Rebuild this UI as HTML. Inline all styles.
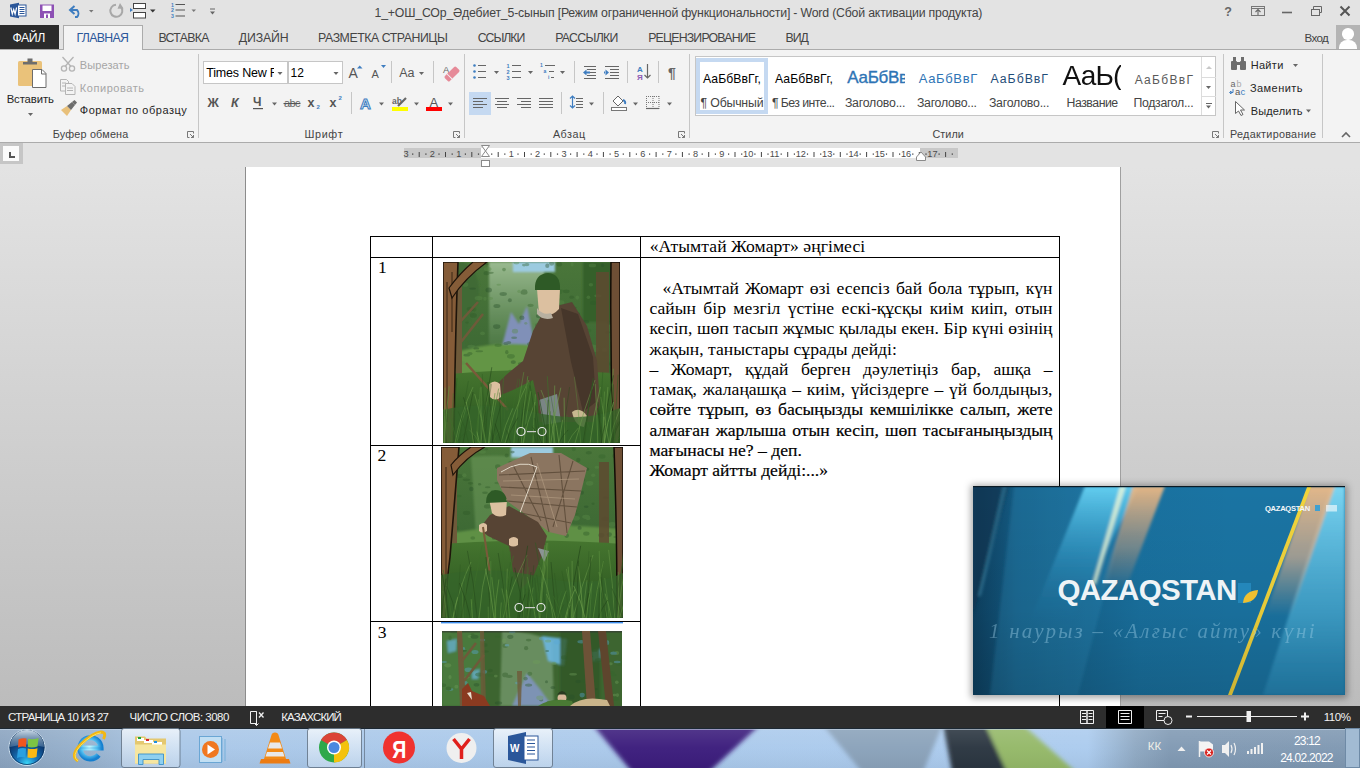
<!DOCTYPE html>
<html><head><meta charset="utf-8">
<style>
*{margin:0;padding:0;box-sizing:border-box}
html,body{width:1360px;height:768px;overflow:hidden;background:#e3e3e3;font-family:"Liberation Sans",sans-serif;position:relative}
.a{position:absolute}
.t{position:absolute;white-space:nowrap;line-height:1}
svg{position:absolute;overflow:visible}
.sep{position:absolute;width:1px;background:#c6c6c6}
.dd{position:absolute;width:0;height:0;border-left:3px solid transparent;border-right:3px solid transparent;border-top:3px solid #666}
.body{position:absolute;left:649.5px;width:403px;font-family:"Liberation Serif",serif;font-size:17.6px;line-height:1;color:#000;white-space:nowrap}
.j{text-align:justify;text-align-last:justify;white-space:normal}
</style></head><body>
<!-- chrome backgrounds -->
<div class="a" style="left:0;top:0;width:1360px;height:49px;background:#e3e3e3"></div>
<div class="a" style="left:0;top:49px;width:1360px;height:1px;background:#ababab"></div>
<div class="a" style="left:0;top:50px;width:1360px;height:92px;background:#f3f3f3"></div>
<div class="a" style="left:0;top:142px;width:1360px;height:1px;background:#ababab"></div>
<div class="a" style="left:0;top:143px;width:1360px;height:24px;background:#e3e3e3"></div>
<div class="a" style="left:0;top:167px;width:1360px;height:539px;background:linear-gradient(#e3e3e3,#bcbcbc)"></div>
<div class="a" style="left:245px;top:167px;width:876px;height:539px;background:#fff;border-left:1px solid #8c8c8c;border-right:1px solid #a0a0a0"></div>
<div class="a" style="left:0;top:706px;width:1360px;height:22px;background:#2d2d2d"></div>

<!-- tabs -->
<div class="a" style="left:0;top:25px;width:59px;height:24px;background:#2b2b2b"></div>
<div class="a" style="left:63px;top:25px;width:80px;height:25px;background:#f3f3f3;border:1px solid #ababab;border-bottom:none"></div>
<div class="a" style="left:1336px;top:25px;width:24px;height:24px;background:#b4b4b4;overflow:hidden">
 <div class="a" style="left:6px;top:3px;width:11.5px;height:11.5px;border-radius:50%;background:#fff"></div>
 <div class="a" style="left:3px;top:14.5px;width:18px;height:16px;border-radius:8px 8px 0 0;background:#fff"></div>
</div>

<!-- title bar icons -->
<svg style="left:0;top:0" width="240" height="25">
 <path d="M10 4.5 L19 2.8 V18.2 L10 16.5z" fill="#2b579a"/>
 <rect x="17.5" y="5" width="8.5" height="11" fill="#fff" stroke="#2b579a"/>
 <path d="M19.5 7.5h5M19.5 9.5h5M19.5 11.5h5M19.5 13.5h5" stroke="#2b579a" stroke-width="1"/>
 <path d="M10.8 7.5 L12.3 14 L13.7 9.5 L15.1 14 L16.6 7.5" stroke="#fff" stroke-width="1.2" fill="none"/>
 <path d="M40 4.5 H54 V18 H40z" fill="#8d50b4"/>
 <rect x="42.5" y="5.5" width="9" height="5.5" fill="#fff"/>
 <rect x="44" y="13.5" width="6" height="4.5" fill="#fff"/>
 <rect x="46" y="14.5" width="2" height="3.5" fill="#8d50b4"/>
 <path d="M74.5 6 L70 10 L74.5 14" stroke="#3e7dc0" stroke-width="2" fill="none"/>
 <path d="M70.5 10 H77 A5 5 0 0 1 77 17 H75" stroke="#3e7dc0" stroke-width="2" fill="none"/>
 <path d="M89 10h4.5l-2.25 2.5z" fill="#777"/>
 <path d="M121 7 A6 6 0 1 1 116 4.8" stroke="#a8a8a8" stroke-width="2" fill="none"/>
 <path d="M120 3 L123.5 8.5 L117.5 8.8z" fill="#a8a8a8"/>
 <rect x="133.5" y="3.5" width="12" height="5" fill="#fff" stroke="#444"/>
 <rect x="133.5" y="12.5" width="12" height="5.5" fill="#fff" stroke="#444"/>
 <path d="M130 8 L133 10 L130 12z" fill="#3e7dc0"/>
 <path d="M150 9.5h5.5l-2.75 3z" fill="#333"/>
 <g font-family="Liberation Sans" font-size="5.2" font-weight="bold" fill="#3e7dc0"><text x="171" y="7">1</text><text x="171" y="12.3">2</text><text x="171" y="17.6">3</text></g>
 <path d="M175.5 4.5h9.5M175.5 10h9.5M175.5 16h9.5" stroke="#555" stroke-width="1.2"/>
 <path d="M191.5 9.5h4.5l-2.25 2.5z" fill="#777"/>
 <path d="M210 9h5" stroke="#666" stroke-width="1"/>
 <path d="M210 11.5h5l-2.5 3z" fill="#666"/>
</svg>
<!-- window controls -->
<svg style="left:1210px;top:0" width="150" height="25">
 <text x="14.2" y="16" font-family="Liberation Sans" font-size="12.5" font-weight="bold" fill="#666">?</text>
 <rect x="41.5" y="6.5" width="13" height="9" fill="none" stroke="#777"/>
 <path d="M42 8.5h12" stroke="#777"/>
 <path d="M48 15v-5M45.5 12l2.5-2.5 2.5 2.5" stroke="#666" fill="none" stroke-width="1.1"/>
 <path d="M72 12.5h10" stroke="#666" stroke-width="1.6"/>
 <rect x="101.5" y="9.5" width="8" height="6" fill="none" stroke="#666"/>
 <path d="M103.5 9.5v-3h8v6h-2" stroke="#666" fill="none"/>
 <path d="M130.5 6.5l9 9M139.5 6.5l-9 9" stroke="#555" stroke-width="2"/>
</svg>

<!-- ribbon separators -->
<div class="sep" style="left:198px;top:54px;height:84px"></div>
<div class="sep" style="left:464px;top:54px;height:84px"></div>
<div class="sep" style="left:689px;top:54px;height:84px"></div>
<div class="sep" style="left:1223px;top:54px;height:84px"></div>
<div class="sep" style="left:1322px;top:54px;height:84px"></div>
<div class="sep" style="left:391px;top:61px;height:22px"></div>
<div class="sep" style="left:433px;top:61px;height:22px"></div>
<div class="sep" style="left:351px;top:92px;height:22px"></div>
<div class="sep" style="left:574px;top:61px;height:22px"></div>
<div class="sep" style="left:627px;top:61px;height:22px"></div>
<div class="sep" style="left:658px;top:61px;height:22px"></div>
<div class="sep" style="left:561px;top:92px;height:22px"></div>
<div class="sep" style="left:603px;top:92px;height:22px"></div>

<svg style="left:0;top:0" width="1360" height="143">
<defs>
 <g id="dl"><path d="M0.5 0.5h6v2M0.5 0.5v6h2" stroke="#777" fill="none"/><path d="M3 3l3.5 3.5M6.5 4v2.5H4" stroke="#777" fill="none"/></g>
 <path id="arr" d="M0 0h5l-2.5 3z" fill="#666"/>
</defs>
<!-- paste -->
<rect x="18" y="61" width="24" height="25" rx="1.5" fill="#eac27a"/>
<path d="M23 64.5h14v-2.5h-4.5v-3.5h-5v3.5h-4.5z" fill="#6d6d6d"/>
<path d="M32.5 69.5h9.5l4 4v14h-13.5z" fill="#fff" stroke="#6d6d6d"/>
<path d="M41.5 69.5v4.5h4.5" fill="none" stroke="#6d6d6d"/>
<use href="#arr" x="28" y="113"/>
<!-- scissors -->
<g stroke="#b4b4b4" stroke-width="1.3" fill="none">
 <path d="M62.5 57l8.5 9.5M73.5 57l-8.5 9.5"/>
 <circle cx="64" cy="68.5" r="2.6"/><circle cx="72" cy="68.5" r="2.6"/>
</g>
<!-- copy -->
<g stroke="#b4b4b4" fill="#f3f3f3">
 <path d="M60.5 79.5h6l2 2v9.5h-8z"/>
 <path d="M65.5 83.5h6.5l3 3v8h-9.5z"/>
 <path d="M62 83h4M62 86h4M67 88h6M67 90.5h6" stroke-width="1"/>
</g>
<!-- format painter -->
<path d="M61 110l6-4 4 4-4 6z" fill="#e8c07a"/>
<path d="M67 106l5-4 3 3-4 5z" fill="#6d6d6d"/>
<path d="M72 102l2.5-2 2.5 2.5-2 2.5z" fill="#6d6d6d"/>
<use href="#dl" x="187" y="131"/>
<use href="#dl" x="453" y="131"/>
<use href="#dl" x="678" y="131"/>
<use href="#dl" x="1212" y="131"/>
<!-- font boxes -->
<rect x="203.5" y="61.5" width="84" height="22" fill="#fff" stroke="#c6c6c6"/>
<rect x="288.5" y="61.5" width="54" height="22" fill="#fff" stroke="#c6c6c6"/>
<use href="#arr" x="277.5" y="72"/>
<use href="#arr" x="333.5" y="72"/>
<!-- grow/shrink -->
<text x="348.5" y="78" font-family="Liberation Sans" font-size="14" fill="#555">A</text>
<path d="M357 68.5h5.5l-2.75-3z" fill="#3e7dc0"/>
<text x="371.5" y="78" font-family="Liberation Sans" font-size="11" fill="#555">A</text>
<path d="M381 65h5l-2.5 3z" fill="#3e7dc0"/>
<use href="#arr" x="419" y="72"/>
<!-- eraser -->
<text x="443" y="73" font-family="Liberation Sans" font-size="9.5" fill="#666">A</text>
<g transform="rotate(-45 452 74)"><rect x="444" y="70.5" width="16" height="7" rx="1.5" fill="#e68a98"/><rect x="448" y="70.5" width="1" height="7" fill="#f3f3f3"/></g>
<!-- B I U -->
<text x="207.5" y="107" font-family="Liberation Sans" font-size="12.5" font-weight="bold" fill="#555">Ж</text>
<text x="231" y="107" font-family="Liberation Sans" font-size="12.5" font-weight="bold" font-style="italic" fill="#555">К</text>
<text x="253" y="106" font-family="Liberation Sans" font-size="12" font-weight="bold" fill="#555">Ч</text>
<rect x="253" y="108" width="10" height="1.2" fill="#555"/>
<use href="#arr" x="272" y="102.5"/>
<text x="284" y="106.5" font-family="Liberation Sans" font-size="11" fill="#666" letter-spacing="-0.6">abc</text>
<rect x="283.5" y="103" width="17" height="1.1" fill="#555"/>
<text x="307.5" y="107" font-family="Liberation Sans" font-size="12.5" font-weight="bold" fill="#555">x</text>
<text x="316.5" y="109" font-family="Liberation Sans" font-size="6" font-weight="bold" fill="#3e7dc0">2</text>
<text x="329.5" y="107" font-family="Liberation Sans" font-size="12.5" font-weight="bold" fill="#555">x</text>
<text x="338.5" y="100" font-family="Liberation Sans" font-size="6" font-weight="bold" fill="#3e7dc0">2</text>
<!-- text effects -->
<text x="360" y="109" font-family="Liberation Sans" font-size="15" font-weight="bold" fill="#dce9f6" stroke="#3e7dc0" stroke-width="1">A</text>
<use href="#arr" x="379" y="102.5"/>
<text x="392" y="104" font-family="Liberation Sans" font-size="8.5" font-weight="bold" fill="#666">ab</text>
<path d="M398 106l8-8" stroke="#666" stroke-width="2.2"/>
<rect x="392" y="107" width="16" height="4" fill="#ffff00"/>
<use href="#arr" x="414" y="102.5"/>
<text x="429.5" y="106.5" font-family="Liberation Sans" font-size="13" fill="#555">A</text>
<rect x="426" y="107" width="16" height="4" fill="#ff0000"/>
<use href="#arr" x="448" y="102.5"/>
<!-- bullets -->
<g fill="#3e7dc0"><circle cx="474.5" cy="65.5" r="1.3"/><circle cx="474.5" cy="71.5" r="1.3"/><circle cx="474.5" cy="77.5" r="1.3"/></g>
<path d="M478 65.5h8M478 71.5h8M478 77.5h8" stroke="#666" stroke-width="1"/>
<use href="#arr" x="494" y="71"/>
<g font-family="Liberation Sans" font-size="5.5" font-weight="bold" fill="#3e7dc0"><text x="506.5" y="67.5">1</text><text x="506.5" y="73.5">2</text><text x="506.5" y="79.5">3</text></g>
<path d="M512 65.5h9M512 71.5h9M512 77.5h9" stroke="#666" stroke-width="1"/>
<use href="#arr" x="528" y="71"/>
<g font-family="Liberation Sans" font-size="5" font-weight="bold" fill="#3e7dc0"><text x="540" y="67">1</text><text x="543.5" y="73">a</text><text x="548" y="79">i</text></g>
<path d="M545 65.5h10M549 71.5h5M551 77.5h3" stroke="#666" stroke-width="1"/>
<use href="#arr" x="560" y="71"/>
<!-- indents -->
<path d="M584 66.5h12M587 69.5h9M587 72.5h9M587 75.5h9M584 78.5h12" stroke="#666" stroke-width="1"/>
<path d="M583 72.5l3.5-3v6z M585 71.5h5v2h-5z" fill="#3e7dc0"/>
<path d="M605 66.5h14M610 69.5h9M610 72.5h9M610 75.5h9M605 78.5h14" stroke="#666" stroke-width="1"/>
<path d="M609 72.5l-3.5-3v6z M604 71.5h2v2h-2z" fill="#3e7dc0"/>
<!-- sort -->
<text x="637" y="72" font-family="Liberation Sans" font-size="8" font-weight="bold" fill="#3e7dc0">A</text>
<text x="637" y="79.5" font-family="Liberation Sans" font-size="8" font-weight="bold" fill="#8d5bb5">Я</text>
<path d="M647.5 64v14M644.5 75l3 3 3-3" stroke="#666" stroke-width="1.2" fill="none"/>
<text x="668" y="78" font-family="Liberation Sans" font-size="14" font-weight="bold" fill="#666">¶</text>
<!-- align -->
<rect x="469" y="92" width="22" height="23" fill="#c5d9f1"/>
<path d="M473 98.5h14M473 101.5h10M473 104.5h14M473 107.5h10" stroke="#666" stroke-width="1"/>
<path d="M495 98.5h14M497 101.5h10M495 104.5h14M497 107.5h10" stroke="#666" stroke-width="1"/>
<path d="M517 98.5h14M521 101.5h10M517 104.5h14M521 107.5h10" stroke="#666" stroke-width="1"/>
<path d="M539 98.5h14M539 101.5h14M539 104.5h14M539 107.5h14" stroke="#666" stroke-width="1"/>
<!-- line spacing -->
<path d="M572.5 96v12M570 98.5l2.5-2.5 2.5 2.5M570 105.5l2.5 2.5 2.5-2.5" stroke="#3e7dc0" stroke-width="1.2" fill="none"/>
<path d="M576 98.5h7M576 101.5h7M576 104.5h7M576 107.5h7" stroke="#666" stroke-width="1"/>
<use href="#arr" x="589" y="102.5"/>
<!-- shading -->
<path d="M613 101l5-5 5 5-5 5z" fill="#fff" stroke="#666"/>
<path d="M623 100a3 3 0 0 1 2 4" stroke="#3e7dc0" stroke-width="2" fill="none"/>
<rect x="611.5" y="107.5" width="15" height="3" fill="#fff" stroke="#777"/>
<use href="#arr" x="633" y="102.5"/>
<!-- borders -->
<path d="M646.5 96v13M653 96v13M659 96v13M646 96.5h13M646 102.5h13" stroke="#777" stroke-dasharray="1 1" fill="none"/>
<path d="M646 108.5h13" stroke="#666" stroke-width="1.2"/>
<use href="#arr" x="667" y="102.5"/>
<!-- styles gallery -->
<rect x="695.5" y="56.5" width="520" height="59" fill="#fff" stroke="#c6c6c6"/>
<rect x="698" y="60" width="68" height="52" fill="none" stroke="#c5d9f1" stroke-width="4"/>
<path d="M1201.5 57v58M1201 77.5h15M1201 96.5h15" stroke="#dcdcdc"/>
<path d="M1206 69h6l-3 -3z" fill="#c8c8c8"/>
<use href="#arr" x="1206" y="86"/>
<path d="M1206 103.5h6" stroke="#666"/><use href="#arr" x="1206" y="105.5"/>
<!-- editing -->
<g fill="#6d6d6d">
 <rect x="1231" y="61" width="6" height="9" rx="1"/><rect x="1240" y="61" width="6" height="9" rx="1"/>
 <rect x="1233" y="57" width="3" height="5"/><rect x="1241" y="57" width="3" height="5"/>
 <rect x="1236" y="62" width="5" height="3"/>
</g>
<use href="#arr" x="1293" y="64"/>
<text x="1230.5" y="87" font-family="Liberation Sans" font-size="9" fill="#666">a</text>
<text x="1236.5" y="87" font-family="Liberation Sans" font-size="9" fill="#aaa">b</text>
<text x="1235" y="95" font-family="Liberation Sans" font-size="9.5" fill="#555">a</text>
<text x="1240.5" y="95" font-family="Liberation Sans" font-size="9.5" fill="#3e7dc0">c</text>
<path d="M1233 89v3.5h-2.5M1229.5 92.5l1.5-1.5v3z" stroke="#3e7dc0" fill="none" stroke-width="1"/>
<path d="M1235.5 101.5v12l3-2.5 2.5 4.5 2-1-2.5-4.5h4z" fill="#fff" stroke="#666"/>
<use href="#arr" x="1306" y="109.5"/>
<path d="M1342 137l4-4 4 4" stroke="#666" stroke-width="1.6" fill="none"/>
</svg>
<div class="a" style="left:206px;top:61px;width:68px;height:22px;overflow:hidden"><div class="t" style="left:0.3px;top:6px;font-size:12.5px;color:#000;letter-spacing:-0.2px">Times New Roman</div></div>
<div class="a" style="left:846px;top:64px;width:59px;height:26px;overflow:hidden"><div class="t" style="left:1.3px;top:4.6px;font-size:17px;color:#2e74b5;-webkit-text-stroke:0.35px #2e74b5;letter-spacing:-0.3px">АаБбВвГг</div></div>
<div class="a" style="left:1062px;top:58px;width:59px;height:32px;overflow:hidden"><div class="t" style="left:0.5px;top:4.3px;font-size:27.5px;color:#111;letter-spacing:-0.8px;transform:scaleX(1.02)">АаЬ(</div></div>


<!-- ruler -->
<div class="a" style="left:0;top:143px;width:23px;height:21px;background:#c6c6c6"></div>
<div class="a" style="left:3px;top:146px;width:16px;height:15px;background:#fbfbfb"></div>
<div class="a" style="left:9px;top:152px;width:2px;height:6px;background:#555"></div>
<div class="a" style="left:9px;top:156px;width:6px;height:2px;background:#555"></div>
<div class="a" style="left:404px;top:148px;width:77px;height:10px;background:#c8c8c8"></div>
<div class="a" style="left:481px;top:148px;width:439px;height:10px;background:#fff"></div>
<div class="a" style="left:920px;top:148px;width:38px;height:10px;background:#c8c8c8"></div>
<svg style="left:0;top:143px" width="1360" height="24">
<text x="406.0" y="13.6" text-anchor="middle" font-family="Liberation Sans" font-size="9.2" fill="#4a4a4a">3</text>
<text x="432.4" y="13.6" text-anchor="middle" font-family="Liberation Sans" font-size="9.2" fill="#4a4a4a">2</text>
<text x="458.7" y="13.6" text-anchor="middle" font-family="Liberation Sans" font-size="9.2" fill="#4a4a4a">1</text>
<text x="511.3" y="13.6" text-anchor="middle" font-family="Liberation Sans" font-size="9.2" fill="#4a4a4a">1</text>
<text x="537.6" y="13.6" text-anchor="middle" font-family="Liberation Sans" font-size="9.2" fill="#4a4a4a">2</text>
<text x="564.0" y="13.6" text-anchor="middle" font-family="Liberation Sans" font-size="9.2" fill="#4a4a4a">3</text>
<text x="590.3" y="13.6" text-anchor="middle" font-family="Liberation Sans" font-size="9.2" fill="#4a4a4a">4</text>
<text x="616.6" y="13.6" text-anchor="middle" font-family="Liberation Sans" font-size="9.2" fill="#4a4a4a">5</text>
<text x="642.9" y="13.6" text-anchor="middle" font-family="Liberation Sans" font-size="9.2" fill="#4a4a4a">6</text>
<text x="669.2" y="13.6" text-anchor="middle" font-family="Liberation Sans" font-size="9.2" fill="#4a4a4a">7</text>
<text x="695.6" y="13.6" text-anchor="middle" font-family="Liberation Sans" font-size="9.2" fill="#4a4a4a">8</text>
<text x="721.9" y="13.6" text-anchor="middle" font-family="Liberation Sans" font-size="9.2" fill="#4a4a4a">9</text>
<text x="748.2" y="13.6" text-anchor="middle" font-family="Liberation Sans" font-size="9.2" fill="#4a4a4a">10</text>
<text x="774.5" y="13.6" text-anchor="middle" font-family="Liberation Sans" font-size="9.2" fill="#4a4a4a">11</text>
<text x="800.8" y="13.6" text-anchor="middle" font-family="Liberation Sans" font-size="9.2" fill="#4a4a4a">12</text>
<text x="827.2" y="13.6" text-anchor="middle" font-family="Liberation Sans" font-size="9.2" fill="#4a4a4a">13</text>
<text x="853.5" y="13.6" text-anchor="middle" font-family="Liberation Sans" font-size="9.2" fill="#4a4a4a">14</text>
<text x="879.8" y="13.6" text-anchor="middle" font-family="Liberation Sans" font-size="9.2" fill="#4a4a4a">15</text>
<text x="906.1" y="13.6" text-anchor="middle" font-family="Liberation Sans" font-size="9.2" fill="#4a4a4a">16</text>
<text x="932.4" y="13.6" text-anchor="middle" font-family="Liberation Sans" font-size="9.2" fill="#4a4a4a">17</text>
<rect x="412.1" y="10.5" width="1.2" height="1.2" fill="#333"/>
<rect x="418.7" y="9" width="1" height="5" fill="#444"/>
<rect x="425.3" y="10.5" width="1.2" height="1.2" fill="#333"/>
<rect x="438.4" y="10.5" width="1.2" height="1.2" fill="#333"/>
<rect x="445.0" y="9" width="1" height="5" fill="#444"/>
<rect x="451.6" y="10.5" width="1.2" height="1.2" fill="#333"/>
<rect x="464.8" y="10.5" width="1.2" height="1.2" fill="#333"/>
<rect x="471.3" y="9" width="1" height="5" fill="#444"/>
<rect x="477.9" y="10.5" width="1.2" height="1.2" fill="#333"/>
<rect x="491.1" y="10.5" width="1.2" height="1.2" fill="#333"/>
<rect x="497.7" y="9" width="1" height="5" fill="#444"/>
<rect x="504.2" y="10.5" width="1.2" height="1.2" fill="#333"/>
<rect x="517.4" y="10.5" width="1.2" height="1.2" fill="#333"/>
<rect x="524.0" y="9" width="1" height="5" fill="#444"/>
<rect x="530.6" y="10.5" width="1.2" height="1.2" fill="#333"/>
<rect x="543.7" y="10.5" width="1.2" height="1.2" fill="#333"/>
<rect x="550.3" y="9" width="1" height="5" fill="#444"/>
<rect x="556.9" y="10.5" width="1.2" height="1.2" fill="#333"/>
<rect x="570.0" y="10.5" width="1.2" height="1.2" fill="#333"/>
<rect x="576.6" y="9" width="1" height="5" fill="#444"/>
<rect x="583.2" y="10.5" width="1.2" height="1.2" fill="#333"/>
<rect x="596.4" y="10.5" width="1.2" height="1.2" fill="#333"/>
<rect x="602.9" y="9" width="1" height="5" fill="#444"/>
<rect x="609.5" y="10.5" width="1.2" height="1.2" fill="#333"/>
<rect x="622.7" y="10.5" width="1.2" height="1.2" fill="#333"/>
<rect x="629.3" y="9" width="1" height="5" fill="#444"/>
<rect x="635.8" y="10.5" width="1.2" height="1.2" fill="#333"/>
<rect x="649.0" y="10.5" width="1.2" height="1.2" fill="#333"/>
<rect x="655.6" y="9" width="1" height="5" fill="#444"/>
<rect x="662.2" y="10.5" width="1.2" height="1.2" fill="#333"/>
<rect x="675.3" y="10.5" width="1.2" height="1.2" fill="#333"/>
<rect x="681.9" y="9" width="1" height="5" fill="#444"/>
<rect x="688.5" y="10.5" width="1.2" height="1.2" fill="#333"/>
<rect x="701.6" y="10.5" width="1.2" height="1.2" fill="#333"/>
<rect x="708.2" y="9" width="1" height="5" fill="#444"/>
<rect x="714.8" y="10.5" width="1.2" height="1.2" fill="#333"/>
<rect x="728.0" y="10.5" width="1.2" height="1.2" fill="#333"/>
<rect x="734.5" y="9" width="1" height="5" fill="#444"/>
<rect x="741.1" y="10.5" width="1.2" height="1.2" fill="#333"/>
<rect x="754.3" y="10.5" width="1.2" height="1.2" fill="#333"/>
<rect x="760.9" y="9" width="1" height="5" fill="#444"/>
<rect x="767.4" y="10.5" width="1.2" height="1.2" fill="#333"/>
<rect x="780.6" y="10.5" width="1.2" height="1.2" fill="#333"/>
<rect x="787.2" y="9" width="1" height="5" fill="#444"/>
<rect x="793.8" y="10.5" width="1.2" height="1.2" fill="#333"/>
<rect x="806.9" y="10.5" width="1.2" height="1.2" fill="#333"/>
<rect x="813.5" y="9" width="1" height="5" fill="#444"/>
<rect x="820.1" y="10.5" width="1.2" height="1.2" fill="#333"/>
<rect x="833.2" y="10.5" width="1.2" height="1.2" fill="#333"/>
<rect x="839.8" y="9" width="1" height="5" fill="#444"/>
<rect x="846.4" y="10.5" width="1.2" height="1.2" fill="#333"/>
<rect x="859.6" y="10.5" width="1.2" height="1.2" fill="#333"/>
<rect x="866.1" y="9" width="1" height="5" fill="#444"/>
<rect x="872.7" y="10.5" width="1.2" height="1.2" fill="#333"/>
<rect x="885.9" y="10.5" width="1.2" height="1.2" fill="#333"/>
<rect x="892.5" y="9" width="1" height="5" fill="#444"/>
<rect x="899.0" y="10.5" width="1.2" height="1.2" fill="#333"/>
<rect x="912.2" y="10.5" width="1.2" height="1.2" fill="#333"/>
<rect x="918.8" y="9" width="1" height="5" fill="#444"/>
<rect x="925.4" y="10.5" width="1.2" height="1.2" fill="#333"/>
<rect x="938.5" y="10.5" width="1.2" height="1.2" fill="#333"/>
<rect x="945.1" y="9" width="1" height="5" fill="#444"/>
<rect x="951.7" y="10.5" width="1.2" height="1.2" fill="#333"/>
<path d="M481.5 2.5h8l-4 5.5z M481.5 13.5h8l-4 -5.5z" fill="#fff" stroke="#8a8a8a"/>
<rect x="481.5" y="17.5" width="8" height="6" fill="#fff" stroke="#8a8a8a"/>
<path d="M916.5 17.5v-3.5l4.5 -5 4.5 5v3.5z" fill="#fff" stroke="#8a8a8a"/>
</svg>

<!-- table -->
<div class="a" style="left:370px;top:236px;width:690px;height:470px;border:1px solid #000;border-bottom:none"></div>
<div class="a" style="left:432px;top:236px;width:1px;height:470px;background:#000"></div>
<div class="a" style="left:640px;top:236px;width:1px;height:470px;background:#000"></div>
<div class="a" style="left:370px;top:257px;width:690px;height:1px;background:#000"></div>
<div class="a" style="left:370px;top:445px;width:271px;height:1px;background:#000"></div>
<div class="a" style="left:370px;top:621px;width:271px;height:1px;background:#000"></div>
<div class="a" style="left:441px;top:622px;width:182px;height:1px;background:#3d8ef0"></div><div class="a" style="left:441px;top:623px;width:182px;height:1px;background:#b5d5f7"></div>

<!-- image 1 -->
<svg style="left:443px;top:262px;overflow:hidden" width="177" height="181" viewBox="0 0 177 181">
 <defs>
  <linearGradient id="g1bg" x1="0" y1="0" x2="0" y2="1"><stop offset="0" stop-color="#4a763a"/><stop offset="0.5" stop-color="#3d6934"/><stop offset="1" stop-color="#2a5220"/></linearGradient>
  <linearGradient id="grass" x1="0" y1="0" x2="0" y2="1"><stop offset="0" stop-color="#45752f"/><stop offset="1" stop-color="#28521d"/></linearGradient>
  <linearGradient id="mist" x1="0" y1="0" x2="0" y2="1"><stop offset="0" stop-color="#a8c6a0"/><stop offset="1" stop-color="#7fa67a" stop-opacity="0.3"/></linearGradient>
  <filter id="sb"><feGaussianBlur stdDeviation="1.2"/></filter>
 </defs>
 <rect width="177" height="181" fill="url(#g1bg)"/>
 <g filter="url(#sb)">
  <path d="M20 0 Q40 10 35 40 Q20 60 25 100 L0 100 L0 0z" fill="#3f6a34"/>
  <path d="M46 0 h55 v82 h-55z" fill="url(#mist)" opacity="0.85"/>
  <path d="M70 0 h42 v10 h-42z" fill="#9ccbe0"/>
  <path d="M140 0 h30 v60 h-30z" fill="#35602c"/>
  <path d="M59 84 L68 50 L76 62 L84 44 L92 84z" fill="#8090b8"/>
  <path d="M0 95 Q50 74 110 86 L110 113 L0 118z" fill="#639545"/>
 </g>
 <g opacity="0.4"><ellipse cx="23.8" cy="93.2" rx="3.4" ry="1.4" fill="#28502a"/><ellipse cx="134.7" cy="51.9" rx="2.4" ry="1.3" fill="#28502a"/><ellipse cx="5.0" cy="91.9" rx="2.6" ry="2.1" fill="#2f5a28"/><ellipse cx="123.2" cy="29.3" rx="3.5" ry="1.9" fill="#2f5a28"/><ellipse cx="159.6" cy="3.4" rx="1.6" ry="1.8" fill="#28502a"/><ellipse cx="121.5" cy="106.6" rx="3.3" ry="1.8" fill="#28502a"/><ellipse cx="166.2" cy="60.8" rx="2.4" ry="2.0" fill="#28502a"/><ellipse cx="168.5" cy="101.9" rx="2.5" ry="2.4" fill="#2f5a28"/><ellipse cx="32.9" cy="109.2" rx="3.6" ry="1.2" fill="#5a8a48"/><ellipse cx="158.5" cy="107.1" rx="2.8" ry="2.5" fill="#35652c"/><ellipse cx="53.7" cy="64.6" rx="3.7" ry="2.3" fill="#28502a"/><ellipse cx="104.3" cy="3.8" rx="2.1" ry="2.2" fill="#28502a"/><ellipse cx="117.7" cy="40.4" rx="3.7" ry="2.2" fill="#5a8a48"/><ellipse cx="15.3" cy="73.0" rx="1.8" ry="1.2" fill="#28502a"/><ellipse cx="65.6" cy="80.6" rx="2.7" ry="1.5" fill="#28502a"/><ellipse cx="114.5" cy="18.5" rx="2.1" ry="1.0" fill="#35652c"/><ellipse cx="95.5" cy="94.6" rx="2.1" ry="1.8" fill="#5a8a48"/><ellipse cx="81.3" cy="29.6" rx="2.9" ry="2.4" fill="#2f5a28"/><ellipse cx="67.9" cy="94.3" rx="3.9" ry="2.4" fill="#35652c"/><ellipse cx="91.8" cy="61.7" rx="2.6" ry="1.1" fill="#5a8a48"/><ellipse cx="100.9" cy="22.0" rx="2.8" ry="1.7" fill="#5a8a48"/><ellipse cx="73.4" cy="0.2" rx="2.9" ry="2.2" fill="#5a8a48"/><ellipse cx="81.1" cy="3.1" rx="2.1" ry="1.3" fill="#35652c"/><ellipse cx="152.4" cy="87.8" rx="3.5" ry="2.2" fill="#5a8a48"/><ellipse cx="5.7" cy="103.8" rx="1.7" ry="2.3" fill="#28502a"/><ellipse cx="2.6" cy="83.1" rx="2.1" ry="1.2" fill="#35652c"/><ellipse cx="61.0" cy="7.6" rx="1.9" ry="1.8" fill="#35652c"/><ellipse cx="116.2" cy="71.3" rx="2.2" ry="2.1" fill="#28502a"/><ellipse cx="83.9" cy="2.6" rx="2.5" ry="1.6" fill="#35652c"/><ellipse cx="45.7" cy="27.9" rx="3.3" ry="2.5" fill="#28502a"/><ellipse cx="144.6" cy="2.3" rx="1.5" ry="1.2" fill="#35652c"/><ellipse cx="78.9" cy="55.7" rx="2.6" ry="2.2" fill="#28502a"/><ellipse cx="39.5" cy="71.3" rx="2.5" ry="1.9" fill="#5a8a48"/><ellipse cx="116.8" cy="46.9" rx="3.3" ry="1.2" fill="#35652c"/><ellipse cx="155.0" cy="33.7" rx="3.6" ry="1.5" fill="#5a8a48"/><ellipse cx="131.7" cy="45.8" rx="2.1" ry="1.0" fill="#2f5a28"/><ellipse cx="104.5" cy="23.9" rx="3.8" ry="1.7" fill="#2f5a28"/><ellipse cx="66.9" cy="38.2" rx="2.0" ry="2.0" fill="#28502a"/><ellipse cx="104.7" cy="54.2" rx="3.8" ry="1.6" fill="#28502a"/><ellipse cx="3.0" cy="67.3" rx="2.5" ry="1.4" fill="#35652c"/><ellipse cx="35.6" cy="36.1" rx="4.0" ry="2.2" fill="#5a8a48"/><ellipse cx="76.0" cy="29.3" rx="1.7" ry="1.6" fill="#5a8a48"/><ellipse cx="161.9" cy="92.1" rx="2.8" ry="2.2" fill="#35652c"/><ellipse cx="11.6" cy="4.4" rx="1.8" ry="1.2" fill="#35652c"/><ellipse cx="47.4" cy="36.5" rx="2.8" ry="1.4" fill="#5a8a48"/><ellipse cx="60.2" cy="32.0" rx="3.7" ry="1.9" fill="#28502a"/><ellipse cx="24.0" cy="60.6" rx="1.8" ry="1.1" fill="#2f5a28"/><ellipse cx="67.3" cy="109.0" rx="1.9" ry="1.2" fill="#2f5a28"/><ellipse cx="108.9" cy="86.0" rx="2.4" ry="1.9" fill="#35652c"/><ellipse cx="100.2" cy="104.7" rx="2.4" ry="1.4" fill="#2f5a28"/><ellipse cx="81.0" cy="30.5" rx="3.5" ry="2.2" fill="#2f5a28"/><ellipse cx="108.6" cy="1.6" rx="2.5" ry="2.2" fill="#2f5a28"/><ellipse cx="33.3" cy="86.4" rx="3.0" ry="1.2" fill="#28502a"/><ellipse cx="29.6" cy="26.6" rx="3.4" ry="1.2" fill="#28502a"/><ellipse cx="142.7" cy="59.7" rx="3.5" ry="1.8" fill="#28502a"/><ellipse cx="55.7" cy="22.8" rx="2.3" ry="1.0" fill="#5a8a48"/><ellipse cx="128.6" cy="35.2" rx="2.5" ry="1.6" fill="#2f5a28"/><ellipse cx="161.7" cy="106.7" rx="3.9" ry="1.2" fill="#35652c"/><ellipse cx="139.0" cy="85.6" rx="3.7" ry="2.3" fill="#28502a"/><ellipse cx="117.1" cy="28.5" rx="2.9" ry="1.5" fill="#35652c"/><ellipse cx="63.8" cy="90.2" rx="1.7" ry="2.1" fill="#2f5a28"/><ellipse cx="115.4" cy="70.8" rx="3.9" ry="1.6" fill="#5a8a48"/><ellipse cx="7.3" cy="20.5" rx="3.5" ry="1.9" fill="#5a8a48"/><ellipse cx="43.5" cy="11.1" rx="3.0" ry="2.2" fill="#2f5a28"/><ellipse cx="43.4" cy="2.2" rx="2.1" ry="1.1" fill="#2f5a28"/><ellipse cx="129.1" cy="2.4" rx="1.5" ry="2.1" fill="#5a8a48"/><ellipse cx="87.3" cy="94.9" rx="1.9" ry="1.8" fill="#5a8a48"/><ellipse cx="13.6" cy="104.4" rx="1.9" ry="2.2" fill="#35652c"/><ellipse cx="145.4" cy="35.2" rx="1.8" ry="1.8" fill="#5a8a48"/><ellipse cx="22.4" cy="22.7" rx="2.9" ry="2.1" fill="#5a8a48"/><ellipse cx="145.3" cy="68.6" rx="3.2" ry="1.8" fill="#35652c"/><ellipse cx="31.5" cy="47.6" rx="1.9" ry="2.1" fill="#35652c"/><ellipse cx="44.7" cy="7.1" rx="3.9" ry="2.2" fill="#5a8a48"/><ellipse cx="95.8" cy="93.6" rx="2.6" ry="1.6" fill="#5a8a48"/><ellipse cx="30.4" cy="53.4" rx="3.5" ry="2.4" fill="#2f5a28"/><ellipse cx="11.0" cy="39.0" rx="1.8" ry="1.2" fill="#5a8a48"/><ellipse cx="174.0" cy="30.5" rx="2.9" ry="1.3" fill="#2f5a28"/><ellipse cx="41.3" cy="0.8" rx="2.8" ry="1.8" fill="#28502a"/><ellipse cx="164.6" cy="70.3" rx="2.1" ry="1.5" fill="#28502a"/><ellipse cx="169.3" cy="78.4" rx="2.3" ry="1.9" fill="#5a8a48"/><ellipse cx="172.1" cy="24.1" rx="3.8" ry="2.1" fill="#5a8a48"/><ellipse cx="28.2" cy="84.3" rx="3.7" ry="1.5" fill="#5a8a48"/><ellipse cx="150.3" cy="40.9" rx="3.3" ry="2.1" fill="#2f5a28"/><ellipse cx="151.6" cy="98.6" rx="3.9" ry="1.9" fill="#35652c"/><ellipse cx="27.6" cy="46.9" rx="3.9" ry="2.1" fill="#2f5a28"/><ellipse cx="87.6" cy="43.3" rx="3.1" ry="1.6" fill="#35652c"/><ellipse cx="96.3" cy="109.4" rx="2.8" ry="1.1" fill="#5a8a48"/><ellipse cx="111.2" cy="29.4" rx="3.8" ry="2.4" fill="#35652c"/><ellipse cx="171.6" cy="67.9" rx="3.9" ry="2.0" fill="#2f5a28"/><ellipse cx="78.8" cy="101.7" rx="3.9" ry="1.6" fill="#28502a"/><ellipse cx="70.3" cy="100.1" rx="2.6" ry="1.9" fill="#28502a"/><ellipse cx="169.8" cy="13.1" rx="3.0" ry="1.6" fill="#2f5a28"/><ellipse cx="116.9" cy="30.5" rx="2.4" ry="1.8" fill="#35652c"/><ellipse cx="93.5" cy="63.7" rx="1.6" ry="2.5" fill="#35652c"/><ellipse cx="147.9" cy="22.7" rx="2.2" ry="1.8" fill="#5a8a48"/><ellipse cx="55.1" cy="83.3" rx="3.6" ry="1.7" fill="#35652c"/><ellipse cx="96.5" cy="54.0" rx="3.6" ry="2.2" fill="#28502a"/><ellipse cx="36.3" cy="89.2" rx="3.8" ry="1.0" fill="#2f5a28"/><ellipse cx="96.5" cy="106.1" rx="3.4" ry="2.5" fill="#35652c"/><ellipse cx="13.3" cy="41.1" rx="3.5" ry="1.7" fill="#5a8a48"/><ellipse cx="134.3" cy="35.6" rx="1.8" ry="2.1" fill="#5a8a48"/><ellipse cx="53.9" cy="43.9" rx="3.5" ry="2.0" fill="#28502a"/><ellipse cx="20.0" cy="101.0" rx="2.5" ry="1.8" fill="#5a8a48"/><ellipse cx="112.5" cy="79.5" rx="3.3" ry="2.1" fill="#35652c"/><ellipse cx="174.7" cy="50.8" rx="3.6" ry="1.6" fill="#5a8a48"/><ellipse cx="124.4" cy="49.4" rx="3.2" ry="1.3" fill="#2f5a28"/><ellipse cx="120.1" cy="63.7" rx="3.9" ry="1.5" fill="#2f5a28"/><ellipse cx="87.2" cy="82.0" rx="3.1" ry="2.0" fill="#2f5a28"/><ellipse cx="72.0" cy="69.2" rx="3.1" ry="2.4" fill="#5a8a48"/><ellipse cx="149.8" cy="84.4" rx="3.5" ry="1.9" fill="#5a8a48"/><ellipse cx="161.5" cy="87.8" rx="2.5" ry="2.0" fill="#5a8a48"/><ellipse cx="26.9" cy="91.6" rx="2.7" ry="1.7" fill="#2f5a28"/><ellipse cx="47.9" cy="10.8" rx="3.0" ry="1.1" fill="#2f5a28"/><ellipse cx="116.3" cy="2.2" rx="2.8" ry="2.4" fill="#2f5a28"/><ellipse cx="71.1" cy="75.8" rx="3.0" ry="1.3" fill="#35652c"/><ellipse cx="42.0" cy="36.7" rx="1.7" ry="2.0" fill="#5a8a48"/><ellipse cx="82.8" cy="61.3" rx="1.6" ry="1.4" fill="#5a8a48"/><ellipse cx="63.0" cy="81.4" rx="2.5" ry="1.6" fill="#28502a"/><ellipse cx="139.8" cy="95.3" rx="2.3" ry="1.3" fill="#35652c"/><ellipse cx="149.4" cy="3.4" rx="3.7" ry="1.9" fill="#5a8a48"/></g>
<path d="M13 20h6v106h-6z" fill="#6e5a3a"/>
 <path d="M18 80 L40 52 M17 60 L35 40" stroke="#6e5a3a" stroke-width="2.5"/>
 <path d="M153 10h13v150h-13z" fill="#5e4a30" opacity="0.85"/>
 <path d="M0 113 Q80 104 177 112 V181 H0z" fill="url(#grass)"/>
 <path d="M0 0h15 q-3 80 -4 181 H0z" fill="#855c38" stroke="#1e140a" stroke-width="1.6"/>
 <path d="M4 20 v140 M9 10 v60" stroke="#3a2614" stroke-width="1"/>
 <path d="M9 36 Q22 16 44 0 H30 Q17 11 6 26z" fill="#855c38" stroke="#1e140a" stroke-width="1.2"/>
 <path d="M168 0h9v181h-7 q-3 -90 -2 -181z" fill="#6e4f35" stroke="#120c06" stroke-width="1.5"/>
 <!-- man -->
 <path d="M102 47 L129 40 L144 64 L154 99 L157 143 L151 160 L96 160 L95 140 L90 118 L70 128 L58 133 L53 123 L63 113 L80 99 L90 69z" fill="#574434"/>
 <path d="M118 46 L135 52 L150 95 L153 140 L140 150 L128 100z" fill="#46362a"/>
 <path d="M94 27 h23 l-1 20 q-8 9 -20 5z" fill="#dcc0a0"/>
 <path d="M94 46 q6 8 14 5 l2 5 q-10 3 -16 -4z" fill="#b8b0a0"/>
 <path d="M92 28 q-1 -16 13 -17 q13 1 12 17z" fill="#2e5a26"/>
 <path d="M23 101 L65 148" stroke="#7a5a3a" stroke-width="2.5"/>
 <path d="M46 122 q6 -5 11 0 l1 13 q-6 5 -11 0z" fill="#dcc0a0"/>
 <path d="M96 138 L114 132 L118 160 L100 163z" fill="#7a8585"/>
 <path d="M129 150 q8 -6 15 4 l-3 11 q-9 -1 -12 -15z" fill="#c8b890"/>
 <path d="M0 148 Q40 138 90 150 T177 146 V181 H0z" fill="#36652a" opacity="0.8"/>
 <g stroke="#6a9a48" stroke-width="0.9" opacity="0.6" fill="none"><path d="M12 181 Q18 150 30 125M38 181 Q40 150 48 120M62 181 Q70 150 86 118M112 181 Q108 150 98 128M132 181 Q140 150 152 118M166 181 Q160 150 158 135M80 181 Q84 160 92 140"/></g>
 <g stroke="#2a4f1e" stroke-width="1" opacity="0.7" fill="none"><path d="M20 181 L30 130M50 181 L45 120M75 181 L85 115M105 181 L95 130M140 181 L150 120M160 181 L155 140"/></g>
 <g fill="none" stroke-width="0.9"><path d="M41.8 181.0 Q41.0 146.4 39.3 111.8" stroke="#2f5a22" opacity="0.44"/><path d="M3.5 181.0 Q2.0 161.1 -1.5 141.3" stroke="#24481a" opacity="0.49"/><path d="M95.0 181.0 Q92.6 152.1 87.1 123.3" stroke="#24481a" opacity="0.50"/><path d="M166.9 181.0 Q167.9 143.8 170.3 106.7" stroke="#5c8f3e" opacity="0.72"/><path d="M34.2 181.0 Q35.2 153.2 37.3 125.5" stroke="#5c8f3e" opacity="0.43"/><path d="M107.2 181.0 Q107.3 165.2 107.4 149.3" stroke="#2f5a22" opacity="0.50"/><path d="M49.6 181.0 Q51.8 174.2 57.2 167.3" stroke="#3d6e2a" opacity="0.74"/><path d="M1.3 181.0 Q2.8 152.6 6.2 124.3" stroke="#5c8f3e" opacity="0.74"/><path d="M90.0 181.0 Q90.7 156.7 92.4 132.3" stroke="#6a9a48" opacity="0.58"/><path d="M41.3 181.0 Q43.4 151.6 48.4 122.1" stroke="#24481a" opacity="0.42"/><path d="M110.9 181.0 Q111.1 152.3 111.7 123.5" stroke="#6a9a48" opacity="0.68"/><path d="M25.7 181.0 Q22.6 165.2 15.3 149.5" stroke="#2f5a22" opacity="0.65"/><path d="M78.1 181.0 Q77.6 149.1 76.5 117.1" stroke="#3d6e2a" opacity="0.53"/><path d="M98.9 181.0 Q96.0 172.8 89.3 164.7" stroke="#24481a" opacity="0.68"/><path d="M49.1 181.0 Q51.7 162.2 57.8 143.4" stroke="#24481a" opacity="0.53"/><path d="M31.4 181.0 Q28.1 158.1 20.5 135.3" stroke="#24481a" opacity="0.76"/><path d="M169.0 181.0 Q172.3 167.3 180.0 153.5" stroke="#24481a" opacity="0.53"/><path d="M56.9 181.0 Q58.0 148.0 60.6 115.1" stroke="#3d6e2a" opacity="0.67"/><path d="M13.8 181.0 Q16.6 163.4 23.2 145.8" stroke="#5c8f3e" opacity="0.45"/><path d="M67.5 181.0 Q66.3 174.7 63.5 168.5" stroke="#24481a" opacity="0.55"/><path d="M80.5 181.0 Q82.7 155.1 87.8 129.1" stroke="#5c8f3e" opacity="0.63"/><path d="M77.8 181.0 Q80.8 149.8 87.8 118.7" stroke="#24481a" opacity="0.42"/><path d="M9.8 181.0 Q11.1 148.6 14.0 116.1" stroke="#2f5a22" opacity="0.64"/><path d="M96.7 181.0 Q95.4 162.2 92.4 143.5" stroke="#24481a" opacity="0.45"/><path d="M93.7 181.0 Q93.0 168.5 91.5 156.1" stroke="#2f5a22" opacity="0.59"/><path d="M42.8 181.0 Q39.5 156.6 31.7 132.1" stroke="#6a9a48" opacity="0.58"/><path d="M114.6 181.0 Q112.5 157.1 107.8 133.2" stroke="#2f5a22" opacity="0.41"/><path d="M45.0 181.0 Q42.9 151.0 38.0 121.0" stroke="#2f5a22" opacity="0.57"/><path d="M46.3 181.0 Q49.1 153.7 55.7 126.5" stroke="#5c8f3e" opacity="0.63"/><path d="M175.3 181.0 Q178.2 156.3 185.0 131.6" stroke="#24481a" opacity="0.60"/><path d="M16.4 181.0 Q19.1 150.0 25.4 118.9" stroke="#2f5a22" opacity="0.53"/><path d="M116.3 181.0 Q117.3 169.4 119.7 157.8" stroke="#6a9a48" opacity="0.61"/><path d="M115.9 181.0 Q114.2 165.6 110.3 150.3" stroke="#6a9a48" opacity="0.78"/><path d="M13.2 181.0 Q16.5 175.0 24.2 169.1" stroke="#2f5a22" opacity="0.42"/><path d="M159.1 181.0 Q162.5 147.2 170.4 113.4" stroke="#24481a" opacity="0.75"/><path d="M121.7 181.0 Q121.5 158.3 121.1 135.7" stroke="#6a9a48" opacity="0.77"/><path d="M38.7 181.0 Q41.7 143.1 48.8 105.2" stroke="#24481a" opacity="0.64"/><path d="M45.5 181.0 Q47.5 156.1 52.0 131.1" stroke="#6a9a48" opacity="0.75"/><path d="M97.5 181.0 Q95.3 172.0 90.3 163.0" stroke="#3d6e2a" opacity="0.53"/><path d="M157.8 181.0 Q157.6 168.5 157.2 156.1" stroke="#3d6e2a" opacity="0.58"/><path d="M14.0 181.0 Q11.2 165.9 4.7 150.9" stroke="#3d6e2a" opacity="0.75"/><path d="M107.6 181.0 Q106.6 147.6 104.3 114.2" stroke="#3d6e2a" opacity="0.76"/><path d="M52.6 181.0 Q49.5 154.4 42.4 127.9" stroke="#3d6e2a" opacity="0.58"/><path d="M36.3 181.0 Q35.5 175.2 33.7 169.5" stroke="#6a9a48" opacity="0.74"/><path d="M70.8 181.0 Q73.8 145.5 80.8 110.1" stroke="#5c8f3e" opacity="0.60"/><path d="M76.8 181.0 Q78.8 171.3 83.4 161.6" stroke="#24481a" opacity="0.65"/><path d="M166.5 181.0 Q169.6 164.0 176.8 147.0" stroke="#6a9a48" opacity="0.57"/><path d="M141.3 181.0 Q144.0 148.5 150.3 116.0" stroke="#2f5a22" opacity="0.68"/><path d="M57.8 181.0 Q56.1 171.4 52.0 161.7" stroke="#24481a" opacity="0.68"/><path d="M1.0 181.0 Q1.3 153.3 2.1 125.6" stroke="#6a9a48" opacity="0.71"/><path d="M106.4 181.0 Q106.5 160.4 106.9 139.7" stroke="#6a9a48" opacity="0.74"/><path d="M63.2 181.0 Q66.6 168.3 74.8 155.6" stroke="#24481a" opacity="0.67"/><path d="M107.9 181.0 Q110.9 153.3 117.8 125.7" stroke="#6a9a48" opacity="0.71"/><path d="M100.6 181.0 Q100.6 173.9 100.8 166.8" stroke="#6a9a48" opacity="0.65"/><path d="M78.2 181.0 Q80.2 147.6 84.8 114.3" stroke="#5c8f3e" opacity="0.79"/><path d="M60.2 181.0 Q60.9 157.3 62.7 133.6" stroke="#3d6e2a" opacity="0.47"/><path d="M159.6 181.0 Q160.2 155.3 161.5 129.6" stroke="#5c8f3e" opacity="0.67"/><path d="M156.3 181.0 Q157.4 145.5 159.8 110.1" stroke="#2f5a22" opacity="0.53"/><path d="M65.8 181.0 Q68.6 148.8 75.0 116.5" stroke="#3d6e2a" opacity="0.41"/><path d="M168.0 181.0 Q170.2 170.4 175.3 159.8" stroke="#24481a" opacity="0.46"/><path d="M103.4 181.0 Q103.9 159.3 105.2 137.7" stroke="#24481a" opacity="0.70"/><path d="M171.4 181.0 Q172.5 146.9 175.1 112.7" stroke="#2f5a22" opacity="0.65"/><path d="M147.1 181.0 Q150.2 153.0 157.4 125.0" stroke="#6a9a48" opacity="0.75"/><path d="M42.0 181.0 Q40.0 159.2 35.3 137.3" stroke="#5c8f3e" opacity="0.49"/><path d="M57.8 181.0 Q61.4 163.7 69.7 146.4" stroke="#6a9a48" opacity="0.60"/><path d="M171.6 181.0 Q171.2 153.3 170.1 125.7" stroke="#3d6e2a" opacity="0.41"/><path d="M32.5 181.0 Q33.9 160.8 37.2 140.7" stroke="#3d6e2a" opacity="0.73"/><path d="M71.5 181.0 Q68.1 155.8 60.2 130.7" stroke="#3d6e2a" opacity="0.43"/><path d="M172.4 181.0 Q175.4 175.6 182.4 170.2" stroke="#3d6e2a" opacity="0.72"/><path d="M161.1 181.0 Q161.0 167.9 160.7 154.9" stroke="#6a9a48" opacity="0.76"/><path d="M137.7 181.0 Q135.8 147.9 131.4 114.8" stroke="#5c8f3e" opacity="0.45"/><path d="M8.3 181.0 Q8.9 156.1 10.3 131.3" stroke="#3d6e2a" opacity="0.62"/><path d="M169.8 181.0 Q170.0 151.7 170.4 122.3" stroke="#2f5a22" opacity="0.70"/><path d="M36.4 181.0 Q33.4 174.3 26.3 167.7" stroke="#5c8f3e" opacity="0.42"/><path d="M175.7 181.0 Q178.5 152.5 185.0 124.1" stroke="#2f5a22" opacity="0.69"/><path d="M116.0 181.0 Q118.7 174.4 125.1 167.9" stroke="#24481a" opacity="0.62"/><path d="M122.8 181.0 Q123.2 166.9 124.1 152.8" stroke="#3d6e2a" opacity="0.56"/><path d="M38.1 181.0 Q38.1 152.8 38.2 124.7" stroke="#6a9a48" opacity="0.47"/><path d="M154.8 181.0 Q154.1 151.5 152.2 121.9" stroke="#5c8f3e" opacity="0.74"/><path d="M58.1 181.0 Q57.6 155.8 56.3 130.5" stroke="#24481a" opacity="0.51"/><path d="M119.7 181.0 Q121.8 153.0 126.6 125.1" stroke="#24481a" opacity="0.46"/><path d="M150.2 181.0 Q148.3 170.2 143.8 159.3" stroke="#3d6e2a" opacity="0.40"/><path d="M161.3 181.0 Q164.0 160.6 170.5 140.1" stroke="#6a9a48" opacity="0.80"/><path d="M125.0 181.0 Q128.2 173.4 135.5 165.8" stroke="#6a9a48" opacity="0.53"/><path d="M30.5 181.0 Q28.3 160.5 23.1 140.0" stroke="#6a9a48" opacity="0.65"/><path d="M161.4 181.0 Q162.4 153.1 164.9 125.1" stroke="#6a9a48" opacity="0.64"/><path d="M6.6 181.0 Q4.8 163.9 0.7 146.7" stroke="#3d6e2a" opacity="0.52"/><path d="M158.5 181.0 Q157.4 163.6 154.7 146.3" stroke="#24481a" opacity="0.76"/><path d="M158.1 181.0 Q159.2 172.1 161.9 163.3" stroke="#24481a" opacity="0.64"/><path d="M93.3 181.0 Q92.2 175.6 89.8 170.2" stroke="#24481a" opacity="0.47"/></g>
<circle cx="78" cy="169.5" r="4" fill="none" stroke="#e8e8e8" stroke-width="1.2"/>
 <circle cx="99" cy="169.5" r="4" fill="none" stroke="#e8e8e8" stroke-width="1.2"/>
 <rect x="84" y="169" width="9" height="1.2" fill="#ccc"/>
</svg>
<!-- image 2 -->
<svg style="left:441px;top:447px;overflow:hidden" width="182" height="171" viewBox="0 0 182 171">
 <rect width="182" height="171" fill="url(#g1bg)"/>
 <g filter="url(#sb)">
  <path d="M70 0 h42 v11 h-42z" fill="#9ccbe0"/>
  <path d="M30 10 Q80 5 120 20 L130 80 L35 90z" fill="#6f9e5e" opacity="0.5"/>
  <path d="M0 88 Q80 72 182 82 L182 100 L0 105z" fill="#5e9044"/>
 </g>
 <g opacity="0.4"><ellipse cx="174.0" cy="90.0" rx="1.6" ry="1.1" fill="#35652c"/><ellipse cx="133.9" cy="63.6" rx="2.3" ry="1.9" fill="#2f5a28"/><ellipse cx="105.8" cy="15.0" rx="2.6" ry="1.6" fill="#5a8a48"/><ellipse cx="99.0" cy="42.3" rx="2.2" ry="1.1" fill="#2f5a28"/><ellipse cx="66.3" cy="88.5" rx="3.8" ry="1.6" fill="#35652c"/><ellipse cx="102.0" cy="22.4" rx="1.6" ry="1.5" fill="#35652c"/><ellipse cx="92.9" cy="34.2" rx="2.8" ry="1.8" fill="#28502a"/><ellipse cx="145.0" cy="69.8" rx="3.8" ry="2.1" fill="#5a8a48"/><ellipse cx="65.9" cy="81.6" rx="2.6" ry="2.4" fill="#28502a"/><ellipse cx="130.2" cy="43.8" rx="2.8" ry="1.7" fill="#28502a"/><ellipse cx="91.2" cy="79.0" rx="2.4" ry="2.3" fill="#28502a"/><ellipse cx="63.8" cy="69.0" rx="2.9" ry="1.7" fill="#35652c"/><ellipse cx="171.2" cy="77.4" rx="3.6" ry="2.3" fill="#5a8a48"/><ellipse cx="140.7" cy="45.6" rx="2.3" ry="2.2" fill="#28502a"/><ellipse cx="56.8" cy="19.7" rx="2.8" ry="2.4" fill="#2f5a28"/><ellipse cx="142.7" cy="32.4" rx="1.5" ry="2.2" fill="#2f5a28"/><ellipse cx="10.7" cy="62.0" rx="2.2" ry="1.3" fill="#2f5a28"/><ellipse cx="137.3" cy="13.0" rx="2.2" ry="2.2" fill="#2f5a28"/><ellipse cx="77.0" cy="68.1" rx="1.6" ry="1.5" fill="#35652c"/><ellipse cx="45.4" cy="2.2" rx="1.8" ry="1.1" fill="#2f5a28"/><ellipse cx="132.8" cy="2.0" rx="2.1" ry="2.2" fill="#35652c"/><ellipse cx="133.7" cy="49.7" rx="1.5" ry="1.9" fill="#35652c"/><ellipse cx="27.6" cy="3.4" rx="2.4" ry="1.9" fill="#2f5a28"/><ellipse cx="52.1" cy="46.4" rx="2.3" ry="1.8" fill="#2f5a28"/><ellipse cx="164.2" cy="71.8" rx="3.7" ry="2.1" fill="#28502a"/><ellipse cx="174.5" cy="8.9" rx="3.2" ry="2.3" fill="#2f5a28"/><ellipse cx="81.5" cy="83.1" rx="1.8" ry="1.9" fill="#28502a"/><ellipse cx="88.6" cy="31.2" rx="3.7" ry="1.5" fill="#5a8a48"/><ellipse cx="110.3" cy="39.9" rx="1.5" ry="1.8" fill="#35652c"/><ellipse cx="122.0" cy="24.0" rx="1.8" ry="1.3" fill="#28502a"/><ellipse cx="115.6" cy="48.3" rx="4.0" ry="2.4" fill="#35652c"/><ellipse cx="42.3" cy="42.2" rx="2.1" ry="1.9" fill="#5a8a48"/><ellipse cx="46.7" cy="40.2" rx="2.8" ry="1.0" fill="#2f5a28"/><ellipse cx="70.0" cy="15.2" rx="2.8" ry="1.1" fill="#2f5a28"/><ellipse cx="18.2" cy="17.3" rx="2.1" ry="1.3" fill="#28502a"/><ellipse cx="82.6" cy="50.9" rx="2.5" ry="2.0" fill="#35652c"/><ellipse cx="132.7" cy="41.2" rx="2.8" ry="1.9" fill="#2f5a28"/><ellipse cx="160.4" cy="88.2" rx="3.0" ry="2.4" fill="#28502a"/><ellipse cx="66.6" cy="49.3" rx="3.8" ry="1.9" fill="#5a8a48"/><ellipse cx="125.7" cy="88.6" rx="2.3" ry="2.3" fill="#28502a"/><ellipse cx="18.4" cy="29.1" rx="3.6" ry="2.0" fill="#2f5a28"/><ellipse cx="147.8" cy="5.7" rx="3.1" ry="1.7" fill="#2f5a28"/><ellipse cx="1.0" cy="2.3" rx="2.3" ry="2.1" fill="#35652c"/><ellipse cx="137.4" cy="18.3" rx="2.9" ry="1.6" fill="#28502a"/><ellipse cx="25.4" cy="32.8" rx="3.7" ry="1.4" fill="#2f5a28"/><ellipse cx="14.7" cy="80.8" rx="3.1" ry="2.4" fill="#2f5a28"/><ellipse cx="4.5" cy="62.6" rx="3.4" ry="2.1" fill="#28502a"/><ellipse cx="52.9" cy="91.2" rx="1.9" ry="1.6" fill="#28502a"/><ellipse cx="95.8" cy="45.4" rx="3.9" ry="2.2" fill="#28502a"/><ellipse cx="152.2" cy="28.2" rx="2.1" ry="1.7" fill="#5a8a48"/><ellipse cx="99.8" cy="66.1" rx="3.2" ry="1.1" fill="#2f5a28"/><ellipse cx="13.0" cy="16.7" rx="2.9" ry="2.2" fill="#2f5a28"/><ellipse cx="145.3" cy="86.6" rx="3.2" ry="2.2" fill="#2f5a28"/><ellipse cx="23.4" cy="28.2" rx="2.1" ry="2.0" fill="#5a8a48"/><ellipse cx="79.9" cy="49.8" rx="1.8" ry="1.8" fill="#28502a"/><ellipse cx="17.5" cy="49.1" rx="3.3" ry="1.4" fill="#35652c"/><ellipse cx="83.9" cy="66.8" rx="2.5" ry="2.5" fill="#35652c"/><ellipse cx="84.9" cy="68.3" rx="3.5" ry="1.6" fill="#35652c"/><ellipse cx="71.5" cy="5.1" rx="2.2" ry="1.4" fill="#28502a"/><ellipse cx="128.4" cy="44.9" rx="3.9" ry="1.5" fill="#2f5a28"/><ellipse cx="138.6" cy="80.9" rx="2.1" ry="1.9" fill="#28502a"/><ellipse cx="148.6" cy="36.3" rx="3.7" ry="2.4" fill="#5a8a48"/><ellipse cx="84.5" cy="67.6" rx="3.7" ry="2.0" fill="#2f5a28"/><ellipse cx="3.1" cy="89.6" rx="3.3" ry="1.9" fill="#35652c"/><ellipse cx="161.0" cy="9.5" rx="3.5" ry="2.2" fill="#35652c"/><ellipse cx="49.9" cy="87.5" rx="3.0" ry="1.7" fill="#35652c"/><ellipse cx="1.5" cy="64.5" rx="2.7" ry="1.8" fill="#35652c"/><ellipse cx="85.0" cy="19.5" rx="3.9" ry="1.1" fill="#2f5a28"/><ellipse cx="164.8" cy="50.7" rx="3.2" ry="1.1" fill="#28502a"/><ellipse cx="168.3" cy="87.6" rx="2.6" ry="2.3" fill="#28502a"/><ellipse cx="5.0" cy="7.6" rx="3.4" ry="1.3" fill="#28502a"/><ellipse cx="46.5" cy="59.4" rx="3.6" ry="2.1" fill="#2f5a28"/><ellipse cx="29.6" cy="36.3" rx="2.7" ry="1.4" fill="#2f5a28"/><ellipse cx="51.4" cy="44.4" rx="1.5" ry="1.1" fill="#28502a"/><ellipse cx="102.7" cy="19.4" rx="3.2" ry="1.7" fill="#35652c"/><ellipse cx="88.0" cy="51.2" rx="3.8" ry="1.1" fill="#5a8a48"/><ellipse cx="55.4" cy="61.4" rx="3.5" ry="2.0" fill="#28502a"/><ellipse cx="94.3" cy="87.4" rx="2.8" ry="1.3" fill="#35652c"/><ellipse cx="145.2" cy="59.7" rx="2.3" ry="1.3" fill="#28502a"/><ellipse cx="102.2" cy="49.7" rx="1.7" ry="1.2" fill="#28502a"/><ellipse cx="155.9" cy="20.3" rx="2.4" ry="1.5" fill="#5a8a48"/><ellipse cx="30.3" cy="42.0" rx="2.2" ry="2.3" fill="#28502a"/><ellipse cx="180.3" cy="20.5" rx="2.2" ry="1.2" fill="#35652c"/><ellipse cx="85.3" cy="71.5" rx="3.6" ry="1.3" fill="#35652c"/><ellipse cx="144.7" cy="22.2" rx="3.5" ry="1.9" fill="#28502a"/><ellipse cx="147.1" cy="71.2" rx="2.2" ry="2.1" fill="#5a8a48"/><ellipse cx="135.1" cy="71.3" rx="3.7" ry="2.4" fill="#5a8a48"/><ellipse cx="96.8" cy="60.5" rx="1.7" ry="1.5" fill="#28502a"/><ellipse cx="31.8" cy="91.0" rx="2.4" ry="1.7" fill="#35652c"/><ellipse cx="57.3" cy="36.0" rx="3.9" ry="1.2" fill="#35652c"/><ellipse cx="65.4" cy="87.2" rx="3.7" ry="2.1" fill="#28502a"/><ellipse cx="1.5" cy="30.4" rx="3.6" ry="1.9" fill="#5a8a48"/><ellipse cx="85.3" cy="85.6" rx="2.4" ry="1.3" fill="#28502a"/><ellipse cx="17.3" cy="13.5" rx="2.0" ry="1.4" fill="#28502a"/><ellipse cx="65.6" cy="8.5" rx="2.0" ry="2.1" fill="#2f5a28"/><ellipse cx="61.2" cy="35.4" rx="3.4" ry="1.1" fill="#35652c"/><ellipse cx="32.3" cy="6.0" rx="2.6" ry="1.4" fill="#5a8a48"/><ellipse cx="95.2" cy="80.3" rx="2.3" ry="2.2" fill="#28502a"/><ellipse cx="41.5" cy="5.1" rx="3.4" ry="1.7" fill="#5a8a48"/><ellipse cx="99.1" cy="59.0" rx="1.7" ry="1.8" fill="#28502a"/><ellipse cx="180.0" cy="79.9" rx="2.6" ry="1.6" fill="#28502a"/><ellipse cx="8.4" cy="10.3" rx="4.0" ry="1.2" fill="#35652c"/><ellipse cx="14.1" cy="29.1" rx="3.5" ry="1.0" fill="#2f5a28"/><ellipse cx="121.7" cy="21.0" rx="1.6" ry="1.6" fill="#2f5a28"/><ellipse cx="61.2" cy="77.9" rx="2.7" ry="2.3" fill="#28502a"/><ellipse cx="44.0" cy="45.7" rx="2.9" ry="1.2" fill="#2f5a28"/><ellipse cx="8.8" cy="51.9" rx="1.5" ry="2.2" fill="#5a8a48"/><ellipse cx="124.1" cy="83.2" rx="1.8" ry="1.7" fill="#35652c"/><ellipse cx="98.3" cy="23.4" rx="2.7" ry="2.2" fill="#35652c"/><ellipse cx="114.0" cy="32.0" rx="3.1" ry="1.6" fill="#35652c"/><ellipse cx="93.0" cy="79.2" rx="1.9" ry="2.4" fill="#35652c"/><ellipse cx="68.7" cy="28.3" rx="2.6" ry="1.6" fill="#28502a"/><ellipse cx="57.1" cy="28.4" rx="1.7" ry="1.1" fill="#5a8a48"/><ellipse cx="51.8" cy="72.7" rx="4.0" ry="1.3" fill="#35652c"/><ellipse cx="127.2" cy="62.5" rx="1.6" ry="1.8" fill="#35652c"/><ellipse cx="38.6" cy="37.2" rx="1.6" ry="1.2" fill="#2f5a28"/><ellipse cx="135.1" cy="66.8" rx="2.7" ry="1.1" fill="#35652c"/><ellipse cx="152.1" cy="56.8" rx="1.6" ry="1.3" fill="#2f5a28"/><ellipse cx="25.6" cy="65.9" rx="3.8" ry="2.1" fill="#2f5a28"/><ellipse cx="178.0" cy="85.4" rx="2.7" ry="1.4" fill="#35652c"/></g>
<path d="M10 21h6v99h-6z" fill="#6e5a3a"/>
 <path d="M158 15h10v140h-10z" fill="#5e4a30" opacity="0.85"/>
 <path d="M0 97 Q90 90 182 97 V171 H0z" fill="url(#grass)"/>
 <path d="M0 0h18 q-5 60 -9 110 q-4 30 -4 61 H0z" fill="#855c38" stroke="#1e140a" stroke-width="1.6"/>
 <path d="M5 20 v120" stroke="#3a2614" stroke-width="1"/>
 <path d="M12 28 Q25 10 44 0 H30 Q18 8 10 18z" fill="#855c38" stroke="#1e140a" stroke-width="1.2"/>
 <path d="M173 0h9v171h-6 q0 -90 -3 -171z" fill="#6e4f35" stroke="#120c06" stroke-width="1.5"/>
 <!-- wood bundle -->
 <path d="M56 21 L89 6 L120 6 L146 21 L139 49 L134 68 L125 89 L108 85 L92 73 L66 54 L56 33z" fill="#8b7560"/>
 <g stroke="#5b4a38" stroke-width="1.1" opacity="0.85"><path d="M58 28 L144 24M60 40 L140 44M66 54 L136 60M80 66 L130 76M90 10 L108 85M118 8 L126 86M72 18 L100 74M132 14 L112 80"/></g>
 <g stroke="#b09a80" stroke-width="1" opacity="0.7"><path d="M62 34 L138 32M70 48 L134 52M96 16 L116 80"/></g>
 <path d="M60 25 Q80 12 96 20 L70 90" stroke="#e0d8c8" stroke-width="1" fill="none"/>
 <!-- man -->
 <path d="M49 68 L68 59 L97 75 L106 89 L101 108 L92 130 L80 142 L73 130 L68 99 L47 89 L38 82z" fill="#574434"/>
 <path d="M48 52 h18 l-1 16 q-8 4 -14 -2z" fill="#dcc0a0"/>
 <path d="M45 56 q0 -12 9 -13 q11 0 12 12z" fill="#2e5a26"/>
 <path d="M38 78 q5 -4 8 0 l0 6 q-5 3 -8 0z" fill="#dcc0a0"/>
 <path d="M68 92 q5 -4 9 0 l0 6 q-5 3 -9 0z" fill="#dcc0a0"/>
 <path d="M42 80 L49 127" stroke="#7a5a3a" stroke-width="2"/>
 <path d="M97 101 L108 104 L103 115z" fill="#8a9494"/>
 <path d="M0 128 Q50 118 100 130 T182 126 V171 H0z" fill="#36652a" opacity="0.8"/>
 <g stroke="#6a9a48" stroke-width="0.9" opacity="0.6" fill="none"><path d="M12 171 Q18 140 30 115M38 171 Q40 140 48 110M62 171 Q70 140 86 108M112 171 Q108 140 98 118M132 171 Q140 140 152 108M166 171 Q160 140 158 125"/></g>
 <g stroke="#2a4f1e" stroke-width="1" opacity="0.7"><path d="M20 171 L30 120M50 171 L45 110M85 171 L90 125M115 171 L110 115M145 171 L150 110M165 171 L160 130"/></g>
 <g fill="none" stroke-width="0.9"><path d="M113.4 171.0 Q115.5 157.5 120.5 144.0" stroke="#3d6e2a" opacity="0.41"/><path d="M84.7 171.0 Q85.8 164.1 88.3 157.3" stroke="#2f5a22" opacity="0.45"/><path d="M85.4 171.0 Q85.7 141.1 86.4 111.3" stroke="#3d6e2a" opacity="0.50"/><path d="M133.1 171.0 Q130.8 146.5 125.4 121.9" stroke="#6a9a48" opacity="0.46"/><path d="M145.1 171.0 Q145.9 137.6 147.9 104.2" stroke="#2f5a22" opacity="0.45"/><path d="M177.0 171.0 Q178.9 133.2 183.5 95.4" stroke="#2f5a22" opacity="0.75"/><path d="M52.7 171.0 Q52.9 164.7 53.6 158.5" stroke="#2f5a22" opacity="0.47"/><path d="M176.3 171.0 Q179.6 139.5 187.4 108.0" stroke="#6a9a48" opacity="0.52"/><path d="M65.7 171.0 Q63.2 138.5 57.2 106.0" stroke="#24481a" opacity="0.53"/><path d="M148.8 171.0 Q149.5 152.3 151.1 133.7" stroke="#5c8f3e" opacity="0.43"/><path d="M64.7 171.0 Q66.1 143.1 69.4 115.2" stroke="#2f5a22" opacity="0.59"/><path d="M128.2 171.0 Q131.7 134.9 139.7 98.8" stroke="#24481a" opacity="0.78"/><path d="M65.1 171.0 Q65.4 146.3 66.3 121.7" stroke="#6a9a48" opacity="0.55"/><path d="M105.3 171.0 Q102.0 133.3 94.4 95.6" stroke="#2f5a22" opacity="0.65"/><path d="M173.7 171.0 Q171.9 136.9 167.6 102.9" stroke="#6a9a48" opacity="0.54"/><path d="M64.6 171.0 Q66.6 150.3 71.2 129.6" stroke="#24481a" opacity="0.64"/><path d="M142.1 171.0 Q140.7 145.1 137.2 119.2" stroke="#6a9a48" opacity="0.78"/><path d="M16.6 171.0 Q17.4 144.2 19.3 117.5" stroke="#2f5a22" opacity="0.54"/><path d="M168.2 171.0 Q166.9 151.0 163.7 131.0" stroke="#5c8f3e" opacity="0.52"/><path d="M145.4 171.0 Q147.0 153.7 150.7 136.4" stroke="#5c8f3e" opacity="0.80"/><path d="M29.4 171.0 Q32.9 134.6 41.1 98.2" stroke="#3d6e2a" opacity="0.77"/><path d="M5.8 171.0 Q4.7 157.4 2.0 143.9" stroke="#5c8f3e" opacity="0.58"/><path d="M76.8 171.0 Q79.8 134.8 86.7 98.7" stroke="#24481a" opacity="0.72"/><path d="M60.8 171.0 Q64.3 139.8 72.4 108.7" stroke="#3d6e2a" opacity="0.78"/><path d="M114.7 171.0 Q111.9 159.0 105.3 147.0" stroke="#6a9a48" opacity="0.55"/><path d="M10.7 171.0 Q8.1 146.9 2.1 122.8" stroke="#3d6e2a" opacity="0.74"/><path d="M177.6 171.0 Q177.5 148.0 177.3 124.9" stroke="#5c8f3e" opacity="0.59"/><path d="M53.0 171.0 Q50.4 146.3 44.5 121.7" stroke="#6a9a48" opacity="0.73"/><path d="M96.8 171.0 Q99.9 138.9 107.3 106.8" stroke="#5c8f3e" opacity="0.47"/><path d="M89.5 171.0 Q89.9 150.0 90.7 129.0" stroke="#3d6e2a" opacity="0.54"/><path d="M143.1 171.0 Q144.5 158.6 147.7 146.1" stroke="#24481a" opacity="0.70"/><path d="M66.1 171.0 Q64.6 156.2 60.9 141.5" stroke="#6a9a48" opacity="0.51"/><path d="M178.5 171.0 Q181.8 156.6 189.5 142.3" stroke="#5c8f3e" opacity="0.66"/><path d="M105.7 171.0 Q106.0 133.4 106.8 95.8" stroke="#5c8f3e" opacity="0.53"/><path d="M49.8 171.0 Q49.8 142.5 49.8 114.1" stroke="#5c8f3e" opacity="0.54"/><path d="M117.2 171.0 Q119.6 157.3 125.1 143.7" stroke="#5c8f3e" opacity="0.77"/><path d="M31.4 171.0 Q31.0 161.6 30.2 152.2" stroke="#5c8f3e" opacity="0.78"/><path d="M94.3 171.0 Q91.9 150.5 86.3 129.9" stroke="#5c8f3e" opacity="0.77"/><path d="M86.9 171.0 Q88.4 155.8 92.1 140.6" stroke="#6a9a48" opacity="0.47"/><path d="M142.0 171.0 Q143.2 152.2 146.0 133.3" stroke="#6a9a48" opacity="0.52"/><path d="M100.7 171.0 Q99.0 161.6 95.2 152.2" stroke="#24481a" opacity="0.48"/><path d="M106.7 171.0 Q104.4 153.6 99.1 136.2" stroke="#2f5a22" opacity="0.65"/><path d="M7.6 171.0 Q5.6 148.6 1.0 126.1" stroke="#24481a" opacity="0.76"/><path d="M20.2 171.0 Q20.0 164.9 19.8 158.9" stroke="#3d6e2a" opacity="0.41"/><path d="M84.7 171.0 Q85.5 145.5 87.4 120.1" stroke="#3d6e2a" opacity="0.48"/><path d="M130.7 171.0 Q129.6 145.3 127.1 119.7" stroke="#5c8f3e" opacity="0.74"/><path d="M157.7 171.0 Q158.0 155.7 158.8 140.5" stroke="#24481a" opacity="0.62"/><path d="M54.9 171.0 Q54.9 142.7 55.2 114.5" stroke="#3d6e2a" opacity="0.52"/><path d="M64.0 171.0 Q63.3 137.3 61.8 103.5" stroke="#3d6e2a" opacity="0.66"/><path d="M67.2 171.0 Q67.9 137.7 69.5 104.4" stroke="#3d6e2a" opacity="0.59"/><path d="M36.2 171.0 Q33.3 137.4 26.4 103.8" stroke="#24481a" opacity="0.55"/><path d="M59.3 171.0 Q59.6 163.2 60.3 155.5" stroke="#5c8f3e" opacity="0.65"/><path d="M162.2 171.0 Q161.7 145.4 160.6 119.8" stroke="#2f5a22" opacity="0.60"/><path d="M87.3 171.0 Q86.4 156.4 84.5 141.7" stroke="#2f5a22" opacity="0.64"/><path d="M47.3 171.0 Q47.3 165.4 47.2 159.7" stroke="#6a9a48" opacity="0.41"/><path d="M172.0 171.0 Q175.1 143.1 182.3 115.3" stroke="#2f5a22" opacity="0.59"/><path d="M22.2 171.0 Q21.8 153.5 20.8 136.0" stroke="#5c8f3e" opacity="0.42"/><path d="M24.8 171.0 Q24.7 145.9 24.4 120.9" stroke="#3d6e2a" opacity="0.51"/><path d="M170.2 171.0 Q168.4 158.8 164.1 146.6" stroke="#5c8f3e" opacity="0.74"/><path d="M131.3 171.0 Q131.2 142.4 131.1 113.9" stroke="#6a9a48" opacity="0.61"/><path d="M157.2 171.0 Q160.0 162.1 166.6 153.1" stroke="#24481a" opacity="0.70"/><path d="M54.7 171.0 Q53.5 150.6 50.8 130.2" stroke="#5c8f3e" opacity="0.69"/><path d="M4.8 171.0 Q6.2 144.5 9.2 118.1" stroke="#3d6e2a" opacity="0.45"/><path d="M0.5 171.0 Q1.9 151.3 5.0 131.5" stroke="#24481a" opacity="0.76"/><path d="M99.3 171.0 Q101.3 133.5 106.0 96.0" stroke="#6a9a48" opacity="0.64"/><path d="M125.4 171.0 Q126.5 164.5 129.0 157.9" stroke="#6a9a48" opacity="0.59"/><path d="M124.2 171.0 Q127.1 156.7 133.8 142.5" stroke="#6a9a48" opacity="0.73"/><path d="M12.0 171.0 Q13.4 160.6 16.7 150.2" stroke="#6a9a48" opacity="0.63"/><path d="M118.0 171.0 Q116.6 148.6 113.5 126.2" stroke="#2f5a22" opacity="0.59"/><path d="M99.9 171.0 Q98.7 149.4 95.9 127.8" stroke="#2f5a22" opacity="0.57"/><path d="M98.5 171.0 Q100.2 134.6 104.1 98.2" stroke="#5c8f3e" opacity="0.73"/><path d="M144.1 171.0 Q140.7 154.9 132.7 138.8" stroke="#6a9a48" opacity="0.79"/><path d="M181.7 171.0 Q178.4 156.1 170.9 141.3" stroke="#24481a" opacity="0.49"/><path d="M117.5 171.0 Q119.1 164.4 122.6 157.8" stroke="#2f5a22" opacity="0.80"/><path d="M128.5 171.0 Q126.2 147.5 120.8 123.9" stroke="#2f5a22" opacity="0.57"/><path d="M29.3 171.0 Q26.0 153.5 18.4 136.1" stroke="#24481a" opacity="0.66"/><path d="M135.7 171.0 Q136.2 142.2 137.4 113.5" stroke="#24481a" opacity="0.70"/><path d="M159.9 171.0 Q159.4 137.4 158.2 103.9" stroke="#5c8f3e" opacity="0.67"/><path d="M89.1 171.0 Q90.2 144.7 92.8 118.3" stroke="#24481a" opacity="0.46"/><path d="M53.6 171.0 Q54.9 151.8 57.9 132.5" stroke="#5c8f3e" opacity="0.76"/><path d="M101.0 171.0 Q99.3 153.5 95.3 136.0" stroke="#3d6e2a" opacity="0.49"/><path d="M151.5 171.0 Q155.0 142.4 162.9 113.7" stroke="#2f5a22" opacity="0.75"/><path d="M82.5 171.0 Q79.9 145.8 73.7 120.7" stroke="#24481a" opacity="0.66"/><path d="M15.5 171.0 Q12.6 155.0 5.7 139.1" stroke="#24481a" opacity="0.60"/><path d="M82.5 171.0 Q82.3 145.9 81.6 120.7" stroke="#5c8f3e" opacity="0.44"/><path d="M96.6 171.0 Q95.8 150.9 93.8 130.8" stroke="#2f5a22" opacity="0.78"/><path d="M78.1 171.0 Q79.9 159.2 84.1 147.4" stroke="#24481a" opacity="0.79"/><path d="M121.0 171.0 Q118.4 160.1 112.4 149.2" stroke="#3d6e2a" opacity="0.55"/><path d="M152.1 171.0 Q155.2 142.6 162.5 114.1" stroke="#5c8f3e" opacity="0.72"/><path d="M68.8 171.0 Q67.8 156.8 65.4 142.7" stroke="#5c8f3e" opacity="0.72"/></g>
<circle cx="78" cy="160.5" r="4" fill="none" stroke="#e8e8e8" stroke-width="1.2"/>
 <circle cx="100" cy="160.5" r="4" fill="none" stroke="#e8e8e8" stroke-width="1.2"/>
 <rect x="84" y="160" width="10" height="1.2" fill="#ccc"/>
</svg>
<!-- image 3 -->
<svg style="left:442px;top:631px;overflow:hidden" width="180" height="75" viewBox="0 0 180 75">
 <rect width="180" height="75" fill="#3d6530"/>
 <g filter="url(#sb)">
  <path d="M0 0h40v75h-40z" fill="#4a7a3c"/>
  <path d="M60 0 Q90 0 110 10 L112 75 L58 75z" fill="#86a87e" opacity="0.6"/>
  <path d="M100 5 L125 8 L122 35 L106 30z" fill="#6ab6e0" opacity="0.9"/>
  <path d="M5 10 L15 8 L14 20 L6 22z M150 20 L160 18 L158 30 L150 30z M30 40 L38 38 L36 48 L30 48z" fill="#6ab6e0" opacity="0.7"/>
  <path d="M118 0 h40 v75 h-40z" fill="#2f5626" opacity="0.8"/>
  <path d="M70 75 L85 42 L98 58 L110 75z" fill="#7d93b4"/>
 </g>
 <g opacity="0.4"><ellipse cx="42.8" cy="40.8" rx="2.4" ry="1.9" fill="#5aa8d8"/><ellipse cx="11.8" cy="1.0" rx="3.6" ry="1.4" fill="#35652c"/><ellipse cx="34.5" cy="53.8" rx="2.9" ry="1.8" fill="#28502a"/><ellipse cx="115.0" cy="11.3" rx="3.1" ry="2.3" fill="#5aa8d8"/><ellipse cx="70.2" cy="1.1" rx="3.4" ry="1.2" fill="#5aa8d8"/><ellipse cx="7.7" cy="58.5" rx="3.6" ry="1.4" fill="#5aa8d8"/><ellipse cx="129.4" cy="65.9" rx="3.3" ry="2.4" fill="#28502a"/><ellipse cx="131.1" cy="43.3" rx="3.9" ry="1.2" fill="#6f9e5a"/><ellipse cx="17.5" cy="10.2" rx="2.0" ry="2.4" fill="#28502a"/><ellipse cx="140.2" cy="64.1" rx="2.6" ry="2.3" fill="#5aa8d8"/><ellipse cx="63.2" cy="43.9" rx="3.0" ry="2.4" fill="#2f5a28"/><ellipse cx="154.2" cy="74.3" rx="3.2" ry="1.2" fill="#6f9e5a"/><ellipse cx="173.6" cy="67.9" rx="2.9" ry="2.1" fill="#35652c"/><ellipse cx="113.9" cy="74.1" rx="2.2" ry="1.2" fill="#28502a"/><ellipse cx="153.7" cy="74.2" rx="1.7" ry="2.2" fill="#28502a"/><ellipse cx="161.5" cy="1.5" rx="2.6" ry="1.6" fill="#2f5a28"/><ellipse cx="8.0" cy="46.1" rx="1.6" ry="2.1" fill="#6f9e5a"/><ellipse cx="99.2" cy="69.1" rx="2.2" ry="1.4" fill="#2f5a28"/><ellipse cx="55.7" cy="5.8" rx="3.0" ry="1.0" fill="#35652c"/><ellipse cx="174.9" cy="21.9" rx="2.2" ry="2.0" fill="#6f9e5a"/><ellipse cx="56.5" cy="71.9" rx="3.7" ry="1.6" fill="#28502a"/><ellipse cx="156.6" cy="29.0" rx="3.7" ry="2.0" fill="#2f5a28"/><ellipse cx="111.6" cy="70.5" rx="2.8" ry="1.6" fill="#35652c"/><ellipse cx="168.6" cy="32.8" rx="2.1" ry="1.5" fill="#6f9e5a"/><ellipse cx="2.1" cy="31.1" rx="2.9" ry="1.0" fill="#5aa8d8"/><ellipse cx="106.1" cy="10.0" rx="3.1" ry="1.5" fill="#6f9e5a"/><ellipse cx="122.3" cy="26.4" rx="3.3" ry="2.1" fill="#2f5a28"/><ellipse cx="106.1" cy="71.6" rx="1.6" ry="1.6" fill="#28502a"/><ellipse cx="53.8" cy="45.1" rx="1.9" ry="1.3" fill="#6f9e5a"/><ellipse cx="151.9" cy="19.8" rx="3.5" ry="1.2" fill="#2f5a28"/><ellipse cx="174.8" cy="51.3" rx="1.8" ry="1.8" fill="#6f9e5a"/><ellipse cx="43.0" cy="14.1" rx="2.6" ry="2.0" fill="#2f5a28"/><ellipse cx="108.1" cy="71.2" rx="3.2" ry="1.3" fill="#35652c"/><ellipse cx="14.4" cy="55.7" rx="2.0" ry="1.9" fill="#6f9e5a"/><ellipse cx="40.5" cy="9.1" rx="2.8" ry="1.3" fill="#5aa8d8"/><ellipse cx="33.0" cy="20.9" rx="3.5" ry="2.0" fill="#5aa8d8"/><ellipse cx="62.2" cy="9.7" rx="2.2" ry="2.2" fill="#6f9e5a"/><ellipse cx="83.6" cy="47.6" rx="2.2" ry="1.9" fill="#2f5a28"/><ellipse cx="165.7" cy="11.7" rx="1.5" ry="2.4" fill="#5aa8d8"/><ellipse cx="177.6" cy="32.6" rx="3.9" ry="2.4" fill="#35652c"/><ellipse cx="5.8" cy="34.3" rx="3.4" ry="2.1" fill="#6f9e5a"/><ellipse cx="97.9" cy="66.7" rx="3.7" ry="2.3" fill="#6f9e5a"/><ellipse cx="21.6" cy="18.3" rx="1.6" ry="2.2" fill="#5aa8d8"/><ellipse cx="166.3" cy="67.2" rx="3.7" ry="1.9" fill="#2f5a28"/><ellipse cx="86.6" cy="9.1" rx="2.8" ry="1.4" fill="#2f5a28"/><ellipse cx="94.5" cy="31.0" rx="3.8" ry="1.9" fill="#6f9e5a"/><ellipse cx="22.6" cy="72.9" rx="2.9" ry="2.2" fill="#2f5a28"/><ellipse cx="63.3" cy="14.8" rx="2.8" ry="2.2" fill="#35652c"/><ellipse cx="43.1" cy="20.5" rx="3.7" ry="1.2" fill="#2f5a28"/><ellipse cx="87.8" cy="42.8" rx="2.5" ry="2.1" fill="#35652c"/><ellipse cx="48.3" cy="39.5" rx="2.6" ry="1.7" fill="#2f5a28"/><ellipse cx="154.3" cy="58.1" rx="1.6" ry="1.1" fill="#28502a"/><ellipse cx="175.4" cy="64.1" rx="1.7" ry="1.8" fill="#6f9e5a"/><ellipse cx="28.3" cy="5.4" rx="2.5" ry="1.6" fill="#6f9e5a"/><ellipse cx="65.0" cy="14.3" rx="2.3" ry="1.2" fill="#5aa8d8"/><ellipse cx="0.6" cy="54.2" rx="3.5" ry="1.9" fill="#2f5a28"/><ellipse cx="67.2" cy="45.3" rx="3.5" ry="1.6" fill="#2f5a28"/><ellipse cx="112.1" cy="32.4" rx="2.4" ry="1.7" fill="#6f9e5a"/><ellipse cx="75.7" cy="52.1" rx="2.7" ry="1.4" fill="#5aa8d8"/><ellipse cx="48.6" cy="44.2" rx="3.5" ry="1.3" fill="#35652c"/><ellipse cx="158.3" cy="70.2" rx="2.4" ry="2.3" fill="#6f9e5a"/><ellipse cx="21.9" cy="51.8" rx="3.8" ry="2.1" fill="#5aa8d8"/><ellipse cx="142.6" cy="50.1" rx="3.3" ry="1.8" fill="#2f5a28"/><ellipse cx="146.1" cy="53.7" rx="2.7" ry="1.4" fill="#28502a"/><ellipse cx="8.0" cy="6.9" rx="1.7" ry="2.3" fill="#35652c"/><ellipse cx="147.5" cy="25.6" rx="3.6" ry="1.0" fill="#2f5a28"/><ellipse cx="121.2" cy="62.7" rx="3.9" ry="1.9" fill="#2f5a28"/><ellipse cx="6.5" cy="57.6" rx="2.8" ry="2.1" fill="#2f5a28"/><ellipse cx="99.8" cy="7.5" rx="2.9" ry="1.8" fill="#5aa8d8"/><ellipse cx="32.5" cy="5.8" rx="4.0" ry="2.0" fill="#28502a"/><ellipse cx="110.9" cy="56.5" rx="2.5" ry="1.6" fill="#28502a"/><ellipse cx="169.0" cy="41.7" rx="3.9" ry="1.6" fill="#35652c"/><ellipse cx="175.2" cy="31.0" rx="3.4" ry="1.2" fill="#5aa8d8"/><ellipse cx="136.1" cy="50.5" rx="2.8" ry="1.7" fill="#28502a"/><ellipse cx="161.5" cy="11.2" rx="1.7" ry="2.1" fill="#5aa8d8"/><ellipse cx="171.1" cy="44.0" rx="3.6" ry="1.2" fill="#35652c"/><ellipse cx="26.4" cy="38.7" rx="3.8" ry="2.3" fill="#5aa8d8"/><ellipse cx="171.6" cy="22.2" rx="3.3" ry="1.6" fill="#5aa8d8"/><ellipse cx="105.2" cy="20.0" rx="2.0" ry="1.0" fill="#28502a"/><ellipse cx="144.7" cy="15.0" rx="2.9" ry="1.4" fill="#28502a"/><ellipse cx="139.4" cy="10.8" rx="4.0" ry="1.7" fill="#5aa8d8"/><ellipse cx="37.0" cy="43.5" rx="3.8" ry="2.0" fill="#2f5a28"/><ellipse cx="86.6" cy="54.1" rx="3.6" ry="1.6" fill="#2f5a28"/><ellipse cx="84.1" cy="17.2" rx="2.1" ry="2.1" fill="#2f5a28"/><ellipse cx="172.6" cy="64.0" rx="2.1" ry="1.3" fill="#6f9e5a"/><ellipse cx="24.7" cy="46.6" rx="3.2" ry="1.1" fill="#6f9e5a"/><ellipse cx="30.5" cy="3.4" rx="2.0" ry="1.1" fill="#2f5a28"/><ellipse cx="21.2" cy="19.8" rx="3.8" ry="1.1" fill="#28502a"/><ellipse cx="104.5" cy="50.7" rx="1.5" ry="1.5" fill="#28502a"/><ellipse cx="68.3" cy="5.8" rx="3.1" ry="2.1" fill="#28502a"/></g>
<path d="M0 0h180v1.5h-180z" fill="#333" opacity="0.6"/>
 <path d="M15 0h5l4 75h-6z" fill="#6e5a3a"/>
 <path d="M22 50 L42 24 M20 30 L34 12" stroke="#6e5a3a" stroke-width="2.5"/>
 <path d="M38 0h4l2 75h-5z" fill="#6e5a3a" opacity="0.8"/>
 <path d="M140 0h8l6 75h-9z" fill="#6d5237"/>
 <path d="M156 0h8l8 75h-8z" fill="#5e452d"/>
 <path d="M75 40 L80 40 L79 75 L76 75z" fill="#6e5a3a" opacity="0.8"/>
 <path d="M20 58 L26 52 L30 60 L42 65 L48 75 L20 75z" fill="#8a3a20"/>
 <path d="M25 62 l4 -1 l1 8z" fill="#e8e0d0"/>
 <circle cx="120" cy="67" r="4.5" fill="#d9b99b"/>
 <path d="M115 63.5 q5 -7 10 0z" fill="#2a3a20"/>
 <path d="M96 75 Q110 66 130 70 L132 75z" fill="#4a7a34"/>
 <path d="M128 75 Q140 64 165 69 L168 75z" fill="#c9b48a"/>
</svg>


<!-- body text -->
<div class="body j" style="top:279.9px;padding-left:13px">«Атымтай Жомарт өзі есепсіз бай бола тұрып, күн</div>
<div class="body j" style="top:300.1px">сайын бір мезгіл үстіне ескі-құсқы киім киіп, отын</div>
<div class="body j" style="top:320.4px">кесіп, шөп тасып жұмыс қылады екен. Бір күні өзінің</div>
<div class="body" style="top:340.6px">жақын, таныстары сұрады дейді:</div>
<div class="body j" style="top:360.9px">– Жомарт, құдай берген дәулетіңіз бар, ашқа –</div>
<div class="body j" style="top:381.1px">тамақ, жалаңашқа – киім, үйсіздерге – үй болдыңыз,</div>
<div class="body j" style="top:401.4px;-webkit-text-stroke:0.2px #000">сөйте тұрып, өз басыңызды кемшілікке салып, жете</div>
<div class="body j" style="top:421.6px;-webkit-text-stroke:0.2px #000">алмаған жарлыша отын кесіп, шөп тасығаныңыздың</div>
<div class="body" style="top:441.9px;-webkit-text-stroke:0.2px #000">мағынасы не? – деп.</div>
<div class="body" style="top:462.1px;-webkit-text-stroke:0.2px #000">Жомарт айтты дейді:...»</div>

<div class="a" style="left:973px;top:486px;width:372px;height:209px;box-shadow:0 1px 7px 2px rgba(0,0,0,0.35)"></div>
<svg style="left:973px;top:486px;overflow:hidden" width="372" height="209" viewBox="0 0 372 209">
 <defs>
  <linearGradient id="tvl" x1="0" y1="0" x2="1" y2="0"><stop offset="0" stop-color="#082a44" stop-opacity="0.7"/><stop offset="0.12" stop-color="#082a44" stop-opacity="0.35"/><stop offset="0.45" stop-color="#082a44" stop-opacity="0.04"/><stop offset="0.7" stop-color="#082a44" stop-opacity="0"/></linearGradient>
  <linearGradient id="tvv" x1="0" y1="0" x2="0" y2="1"><stop offset="0" stop-color="#000" stop-opacity="0"/><stop offset="0.6" stop-color="#000" stop-opacity="0.05"/><stop offset="1" stop-color="#000" stop-opacity="0.15"/></linearGradient>
  <linearGradient id="beam1" x1="0" y1="0" x2="0" y2="1"><stop offset="0" stop-color="#66d2f4" stop-opacity="0.95"/><stop offset="0.5" stop-color="#3aa6d4" stop-opacity="0.45"/><stop offset="1" stop-color="#1a74a3" stop-opacity="0"/></linearGradient>
  <linearGradient id="tan1" x1="0" y1="0" x2="0" y2="1"><stop offset="0" stop-color="#e6b684" stop-opacity="0.98"/><stop offset="0.6" stop-color="#c8a080" stop-opacity="0.5"/><stop offset="1" stop-color="#c09070" stop-opacity="0"/></linearGradient>
  <linearGradient id="tan2" x1="0" y1="0" x2="0" y2="1"><stop offset="0" stop-color="#e6b888" stop-opacity="0.98"/><stop offset="0.55" stop-color="#d8b090" stop-opacity="0.7"/><stop offset="1" stop-color="#c8a888" stop-opacity="0"/></linearGradient>
  <linearGradient id="glowR" x1="0" y1="0" x2="0" y2="1"><stop offset="0" stop-color="#80daf6" stop-opacity="0.95"/><stop offset="0.7" stop-color="#50b8e0" stop-opacity="0.55"/><stop offset="1" stop-color="#3aa8d8" stop-opacity="0.3"/></linearGradient>
  <filter id="tvb"><feGaussianBlur stdDeviation="1.5"/></filter>
 </defs>
 <rect width="372" height="209" fill="#1a74a3"/>
 <rect width="372" height="209" fill="url(#tvl)"/>
 <g filter="url(#tvb)">
  <path d="M0 0 L36 0 L0 130z" fill="#0c3450" opacity="0.7"/>
  <path d="M30 0 L34 0 L8 110 L5 110z" fill="#5aaed0" opacity="0.35"/>
  <path d="M41 0 L160 0 L105 209 L17 209z" fill="#2a90c0" opacity="0.28"/>
  <path d="M112 0 L166 0 L96 140 L55 140z" fill="url(#beam1)"/>
  <path d="M147 0 L153 0 L123 98 L119 98z" fill="#f4fbd8" opacity="0.75"/>
  <path d="M160 0 L192 0 L152 105 L128 105z" fill="url(#tan1)"/>
  <path d="M358 0 L372 0 L372 209 L290 209z" fill="url(#glowR)"/>
  <path d="M336 0 L362 0 L318 130 L292 130z" fill="url(#tan2)"/>
 </g>
 <path d="M334.5 0 L338.5 0 L259 209 L255 209z" fill="#f2d43c"/>
 <rect width="372" height="209" fill="url(#tvv)"/>
 <rect width="372" height="1.2" fill="#0a1a24"/>
 <text x="84.5" y="114" font-family="Liberation Sans" font-size="29.5" font-weight="bold" fill="#eef3f6" letter-spacing="-0.6">QAZAQSTAN</text>
 <rect x="265" y="97" width="13" height="20" fill="#2a92c8" opacity="0.7"/>
 <path d="M270 117 q1 -12 15 -13 q-1 12 -15 13z" fill="#f0c030"/>
 <text x="292" y="25" font-family="Liberation Sans" font-size="7.6" font-weight="bold" fill="#f4f7f9" letter-spacing="-0.3">QAZAQSTAN</text>
 <rect x="342" y="19" width="5" height="6" fill="#40a0d0"/>
 <rect x="353" y="19" width="11" height="6.5" fill="#fff" opacity="0.6"/>
 <text x="16" y="152" font-family="Liberation Serif" font-size="21" font-style="italic" fill="#9fd0e8" opacity="0.42" letter-spacing="2.2">1 наурыз – «Алғыс айту» күні</text>
</svg>


<!-- status bar icons -->
<svg style="left:0;top:706px" width="1360" height="22">
 <g stroke="#f0f0f0" fill="none" stroke-width="1">
  <path d="M256.5 5.5h-6v12h6v-12"/>
  <path d="M256.5 5.5v14M254.5 17.5l2 2 2-2"/>
 </g>
 <path d="M259 6.5l4.5 5M263.5 6.5l-4.5 5" stroke="#f0f0f0" stroke-width="1.3"/>
 <!-- read mode -->
 <g stroke="#f0f0f0" fill="none"><path d="M1080.5 4.5h6.5v13h-6.5z M1087 4.5h6.5v13h-6.5z"/><path d="M1082 7.5h4M1082 10.5h4M1082 13.5h4M1088.5 7.5h4M1088.5 10.5h4M1088.5 13.5h4"/></g>
 <rect x="1106" y="0" width="38" height="22" fill="#000"/>
 <g stroke="#f0f0f0" fill="none"><path d="M1118.5 4.5h13v13h-13z"/><path d="M1120.5 7.5h9M1120.5 10.5h9M1120.5 13.5h9"/></g>
 <g stroke="#f0f0f0" fill="none"><path d="M1156.5 4.5h11v10h-11z"/><path d="M1158.5 7.5h7M1158.5 10.5h4"/></g>
 <circle cx="1168" cy="14.5" r="4" fill="#2d2d2d" stroke="#f0f0f0"/>
 <path d="M1186 10.5h6" stroke="#f0f0f0" stroke-width="2"/>
 <path d="M1197 10.5h100" stroke="#f0f0f0" stroke-width="1"/>
 <rect x="1246.5" y="5" width="4.5" height="11" fill="#f0f0f0"/>
 <path d="M1301 10.5h8M1305 6.5v8" stroke="#f0f0f0" stroke-width="2"/>
</svg>


<!-- taskbar -->
<svg style="left:0;top:728px;overflow:hidden" width="1360" height="40">
 <defs>
  <linearGradient id="tbg" x1="0" y1="0" x2="1360" y2="0" gradientUnits="userSpaceOnUse"><stop offset="0" stop-color="#8aa3bf"/><stop offset="0.07" stop-color="#98b3cf"/><stop offset="0.13" stop-color="#a9c7e8"/><stop offset="0.8" stop-color="#abcbee"/><stop offset="0.835" stop-color="#8ea8c2"/><stop offset="0.86" stop-color="#8099b3"/><stop offset="1" stop-color="#7f98b2"/></linearGradient>
  <linearGradient id="tgl" x1="0" y1="0" x2="0" y2="1"><stop offset="0" stop-color="#fff" stop-opacity="0.12"/><stop offset="0.5" stop-color="#fff" stop-opacity="0.03"/><stop offset="1" stop-color="#000" stop-opacity="0.04"/></linearGradient>
  <linearGradient id="btn" x1="0" y1="0" x2="0" y2="1"><stop offset="0" stop-color="#f2f7fc" stop-opacity="0.85"/><stop offset="1" stop-color="#cfe0f2" stop-opacity="0.55"/></linearGradient>
  <radialGradient id="orb" cx="0.5" cy="0.35" r="0.65"><stop offset="0" stop-color="#7ccaf0"/><stop offset="0.55" stop-color="#2a78b8"/><stop offset="1" stop-color="#0e3d70"/></radialGradient>
  <linearGradient id="ie" x1="0" y1="0" x2="0" y2="1"><stop offset="0" stop-color="#6fd4fa"/><stop offset="1" stop-color="#1a8ad8"/></linearGradient>
  <filter id="bl" x="-20%" y="-20%" width="140%" height="140%"><feGaussianBlur stdDeviation="2.2"/></filter>
 </defs>
 <rect width="1360" height="40" fill="url(#tbg)"/>
 <g filter="url(#bl)">
  <path d="M592 -4 L761 -4 L709 44 L632 44z" fill="#3b1b7b"/>
  <path d="M822 -4 L943 -4 L923 44 L862 44z" fill="#8aa2ba"/>
  <path d="M943 -4 L985 -4 L1007 44 L952 44z" fill="#2a3540"/>
  <path d="M985 -4 L1022 -4 L1076 44 L1007 44z" fill="#94b868"/>
 </g>
 <rect width="1360" height="40" fill="url(#tgl)"/>
 <rect x="0" y="0" width="1360" height="1" fill="#1c2833"/>
 <rect x="0" y="1" width="1360" height="1" fill="#c8d6e4" opacity="0.6"/>
 <!-- start orb -->
 <defs>
  <radialGradient id="orb2" cx="0.5" cy="0.95" r="0.75"><stop offset="0" stop-color="#3ad8f8"/><stop offset="0.35" stop-color="#1a7ac0"/><stop offset="0.8" stop-color="#0c3e78"/><stop offset="1" stop-color="#0a2e5a"/></radialGradient>
  <linearGradient id="orbtop" x1="0" y1="0" x2="0" y2="1"><stop offset="0" stop-color="#e0ecf6" stop-opacity="0.9"/><stop offset="1" stop-color="#8ab0d0" stop-opacity="0.35"/></linearGradient>
  <radialGradient id="ie2" cx="0.45" cy="0.45" r="0.6"><stop offset="0" stop-color="#c8faff"/><stop offset="0.6" stop-color="#5cc8f4"/><stop offset="1" stop-color="#1580d0"/></radialGradient>
 </defs>
 <circle cx="27" cy="19.5" r="18" fill="url(#orb2)" stroke="#cfe0ee" stroke-width="1"/>
 <circle cx="27" cy="19.5" r="17" fill="none" stroke="#0e3560" stroke-width="0.8"/>
 <path d="M10 19 A17 17 0 0 1 44 19 Q27 14 10 19z" fill="url(#orbtop)"/>
 <path d="M18.5 11.5 Q22 9.5 26.5 10.5 L26 19 Q22 18 18 19.5z" fill="#f0561e"/>
 <path d="M28 10.8 Q33 12 38.5 10 L37.5 18.5 Q32.5 20 27.8 19z" fill="#7cc444"/>
 <path d="M18 21 Q22 19.5 26 20.5 L25.5 29.5 Q21 28.5 17 30z" fill="#2aa0e0"/>
 <path d="M27.8 20.6 Q32.5 21.8 37.5 20.2 L36.5 29 Q32 30.5 27.5 29.5z" fill="#fcb914"/>
 <!-- IE -->
 <path d="M80 20 H101 A10.5 10.5 0 1 0 98.6 27" stroke="url(#ie2)" stroke-width="5.2" fill="none"/>
 <path d="M80 20 H101" stroke="#1a7cc8" stroke-width="0.6" opacity="0.6"/>
 <path d="M78 33 Q70 28 80 17 Q92 5 101 4 Q107 4.5 103.5 11" stroke="#f2b712" stroke-width="3" fill="none"/>
 <path d="M78 33 Q71 28 80.5 17.5 Q92 6 101 4.8" stroke="#ffe15a" stroke-width="1" fill="none"/>
 <!-- explorer button -->
 <rect x="121.5" y="0.5" width="58.5" height="39" rx="2.5" fill="url(#btn)" stroke="#5e6e80" stroke-opacity="0.8"/>
 <path d="M135 8.5h10l1.5 2h19.5v25h-31z" fill="#e4c870"/>
 <path d="M137 10h7v3h-7z" fill="#fff"/><path d="M144 12h9v3h-9z" fill="#fff"/><path d="M152 14h10v3h-10z" fill="#fff"/>
 <rect x="138" y="9" width="3" height="2" fill="#21a336"/><rect x="146" y="11" width="3" height="2" fill="#d8222b"/><rect x="154" y="13" width="3" height="2" fill="#1e8ee0"/>
 <path d="M135 16.5h31v19h-31z" fill="#f6e6a0"/>
 <path d="M138.5 26h25v10.5h-4.5v-5h-16v5h-4.5z" fill="#8fd0f0" stroke="#3a90c8" stroke-width="0.9"/>
 <!-- wmp -->
 <path d="M222 10v24M225 11v22" stroke="#7fb5dc" stroke-width="1.2"/>
 <rect x="199.5" y="8.5" width="22" height="26" fill="#c2dff3" stroke="#6aa6d4"/>
 <circle cx="210.5" cy="21.5" r="8.5" fill="#f07820"/>
 <path d="M207.5 16.5v10l7.5 -5z" fill="#fff"/>
 <!-- vlc -->
 <path d="M275 4.5 Q278 4.5 278.5 7 L286 31 H264 L271.5 7 Q272 4.5 275 4.5z" fill="#f28a16"/>
 <path d="M270 14.5 h10 l2 6 h-14z M267 24 h16 l1.5 4.5 h-19z" fill="#e8e8e8"/>
 <path d="M261 31 h28 l1.5 4.5 h-31z" fill="#ec7c14"/>
 <!-- chrome button -->
 <rect x="307.5" y="0.5" width="54" height="39" rx="2.5" fill="url(#btn)" stroke="#5e6e80" stroke-opacity="0.8"/>
 <path d="M364.5 1v39" stroke="#5e6e80" stroke-opacity="0.7"/>
 <circle cx="334" cy="19.5" r="15" fill="#2ea84a"/>
 <path d="M334 19.5 L321 12 A15 15 0 0 1 347 12z" fill="#db4437"/>
 <path d="M334 19.5 L347 12 A15 15 0 0 1 334 34.5z" fill="#f4c20d"/>
 <circle cx="334" cy="19.5" r="7" fill="#fff"/>
 <circle cx="334" cy="19.5" r="5.5" fill="#4a88e0"/>
 <!-- yandex -->
 <circle cx="399" cy="19.5" r="16" fill="#f0322f"/>
 <text x="0" y="0" transform="translate(392.3 30) scale(0.85 1)" font-family="Liberation Sans" font-size="23" font-weight="bold" fill="#fff">Я</text>
 <circle cx="461.5" cy="20" r="15" fill="#efefef"/>
 <path d="M453.5 11 L461.5 21 L469.5 11 M461.5 21v10" stroke="#e0201c" stroke-width="3.5" fill="none"/>
 <!-- word button -->
 <rect x="493.5" y="0.5" width="59" height="39" rx="2.5" fill="url(#btn)" stroke="#5e6e80" stroke-opacity="0.8"/>
 <path d="M508 8 L526 4 V36 L508 32z" fill="#2b579a"/>
 <rect x="524" y="8" width="14" height="24" fill="#fff" stroke="#2b579a"/>
 <path d="M527 12h8M527 15.5h8M527 19h8M527 22.5h8M527 26h8" stroke="#2b579a" stroke-width="1.2"/>
 <text x="510" y="24" font-family="Liberation Sans" font-size="10" font-weight="bold" fill="#fff">W</text>
 <!-- tray -->
 <path d="M1177.5 23 L1181.5 18.5 L1185.5 23z" fill="#f0f0f0"/>
 <path d="M1199.5 13v16" stroke="#f0f0f0" stroke-width="1.5"/>
 <path d="M1200 13.5 h9 l4 3 v7 h-13z" fill="#f4f4f4"/>
 <circle cx="1209" cy="24.5" r="4.5" fill="#d8201c" stroke="#fff" stroke-width="0.8"/>
 <path d="M1207 22.5l4 4M1211 22.5l-4 4" stroke="#fff" stroke-width="1.2"/>
 <path d="M1222 17h3l4 -4v16l-4 -4h-3z" fill="#f0f0f0"/>
 <path d="M1231 17 q2 4 0 8 M1234 15 q3 6 0 12" stroke="#f0f0f0" stroke-width="1.2" fill="none"/>
 <g fill="#f0f0f0"><rect x="1247" y="23" width="2" height="3"/><rect x="1250.5" y="21" width="2" height="5"/><rect x="1254" y="19" width="2" height="7"/><rect x="1257.5" y="17" width="2" height="9"/><rect x="1261" y="15" width="2" height="11"/></g>
 <rect x="1345.5" y="0.5" width="14" height="39" fill="#a2bbd3" stroke="#6e8aa6"/>
</svg>


<div class="t" id="ttl" style="left:374.5px;top:7.19px;font-size:12.30px;color:#444;letter-spacing:-0.185px;">1_+ОШ_СОр_Әдебиет_5-сынып [Режим ограниченной функциональности] - Word (Сбой активации продукта)</div>
<div class="t" id="tb0" style="left:12.4px;top:32.19px;font-size:12.30px;color:#fff;letter-spacing:-0.434px;">ФАЙЛ</div>
<div class="t" id="tb1" style="left:76.5px;top:32.19px;font-size:12.30px;color:#2b579a;letter-spacing:-0.684px;">ГЛАВНАЯ</div>
<div class="t" id="tb2" style="left:158.4px;top:32.19px;font-size:12.30px;color:#444;letter-spacing:-0.690px;">ВСТАВКА</div>
<div class="t" id="tb3" style="left:238.8px;top:32.19px;font-size:12.30px;color:#444;letter-spacing:-0.123px;">ДИЗАЙН</div>
<div class="t" id="tb4" style="left:318.1px;top:32.19px;font-size:12.30px;color:#444;letter-spacing:-0.448px;">РАЗМЕТКА СТРАНИЦЫ</div>
<div class="t" id="tb5" style="left:477.7px;top:32.19px;font-size:12.30px;color:#444;letter-spacing:-1.024px;">ССЫЛКИ</div>
<div class="t" id="tb6" style="left:555.2px;top:32.19px;font-size:12.30px;color:#444;letter-spacing:-0.704px;">РАССЫЛКИ</div>
<div class="t" id="tb7" style="left:648.2px;top:32.19px;font-size:12.30px;color:#444;letter-spacing:-0.805px;">РЕЦЕНЗИРОВАНИЕ</div>
<div class="t" id="tb8" style="left:785.6px;top:32.19px;font-size:12.30px;color:#444;letter-spacing:-1.088px;">ВИД</div>
<div class="t" id="vhod" style="left:1304.5px;top:31.78px;font-size:11.60px;color:#444;letter-spacing:-0.661px;">Вход</div>
<div class="t" id="r1" style="left:6.7px;top:94.03px;font-size:11.30px;color:#262626;letter-spacing:-0.099px;">Вставить</div>
<div class="t" id="r2" style="left:79.8px;top:60.09px;font-size:11.00px;color:#a6a6a6;letter-spacing:0.109px;">Вырезать</div>
<div class="t" id="r3" style="left:79.8px;top:83.09px;font-size:11.00px;color:#a6a6a6;letter-spacing:0.552px;">Копировать</div>
<div class="t" id="r4" style="left:79.8px;top:105.49px;font-size:11.00px;color:#262626;letter-spacing:0.522px;">Формат по образцу</div>
<div class="t" id="g1" style="left:52.7px;top:129.06px;font-size:10.80px;color:#444;letter-spacing:0.202px;">Буфер обмена</div>
<div class="t" id="g2" style="left:304.5px;top:129.06px;font-size:10.80px;color:#444;letter-spacing:0.642px;">Шрифт</div>
<div class="t" id="g3" style="left:552.9px;top:129.06px;font-size:10.80px;color:#444;letter-spacing:0.501px;">Абзац</div>
<div class="t" id="g4" style="left:932.5px;top:129.06px;font-size:10.80px;color:#444;letter-spacing:0.035px;">Стили</div>
<div class="t" id="g5" style="left:1230.0px;top:129.06px;font-size:10.80px;color:#444;letter-spacing:0.288px;">Редактирование</div>
<div class="t" id="e1" style="left:1250.7px;top:60.29px;font-size:11.00px;color:#262626;letter-spacing:0.302px;">Найти</div>
<div class="t" id="e2" style="left:1249.9px;top:83.09px;font-size:11.00px;color:#262626;letter-spacing:0.466px;">Заменить</div>
<div class="t" id="e3" style="left:1250.7px;top:105.99px;font-size:11.00px;color:#262626;letter-spacing:0.164px;">Выделить</div>
<div class="t" id="fn" style="left:290.6px;top:66.94px;font-size:12.00px;color:#000;letter-spacing:0.000px;">12</div>
<div class="t" id="aa" style="left:399.2px;top:66.52px;font-size:12.50px;color:#555;letter-spacing:0.000px;">Aa</div>
<div class="t" id="s1a" style="left:703.0px;top:73.03px;font-size:12.20px;color:#000;letter-spacing:0.053px;">АаБбВвГг,</div>
<div class="t" id="s1b" style="left:700.6px;top:96.79px;font-size:12.30px;color:#444;letter-spacing:-0.184px;">¶ Обычный</div>
<div class="t" id="s2a" style="left:775.0px;top:73.03px;font-size:12.20px;color:#000;letter-spacing:0.053px;">АаБбВвГг,</div>
<div class="t" id="s2b" style="left:772.0px;top:96.79px;font-size:12.30px;color:#444;letter-spacing:-0.581px;">¶ Без инте...</div>
<div class="t" id="s3b" style="left:844.9px;top:97.19px;font-size:12.30px;color:#444;letter-spacing:-0.209px;">Заголово...</div>
<div class="t" id="s4a" style="left:918.8px;top:72.29px;font-size:13.00px;color:#2e74b5;letter-spacing:0.627px;">АаБбВвГ</div>
<div class="t" id="s4b" style="left:916.9px;top:97.19px;font-size:12.30px;color:#444;letter-spacing:-0.259px;">Заголово...</div>
<div class="t" id="s5a" style="left:990.5px;top:72.89px;font-size:12.30px;color:#1f4d78;letter-spacing:0.969px;">АаБбВвГ</div>
<div class="t" id="s5b" style="left:988.9px;top:97.19px;font-size:12.30px;color:#444;letter-spacing:-0.209px;">Заголово...</div>
<div class="t" id="s6b" style="left:1066.5px;top:96.69px;font-size:12.30px;color:#444;letter-spacing:-0.465px;">Название</div>
<div class="t" id="s7a" style="left:1134.7px;top:73.54px;font-size:12.00px;color:#5a5a5a;letter-spacing:1.294px;">АаБбВвГ</div>
<div class="t" id="s7b" style="left:1133.4px;top:96.69px;font-size:12.30px;color:#444;letter-spacing:-0.308px;">Подзагол...</div>
<div class="t" id="st1" style="left:8.0px;top:711.66px;font-size:11.50px;color:#f2f2f2;letter-spacing:-0.729px;">СТРАНИЦА 10 ИЗ 27</div>
<div class="t" id="st2" style="left:129.6px;top:711.66px;font-size:11.50px;color:#f2f2f2;letter-spacing:-0.521px;">ЧИСЛО СЛОВ: 3080</div>
<div class="t" id="st3" style="left:281.3px;top:711.66px;font-size:11.50px;color:#f2f2f2;letter-spacing:-0.886px;">КАЗАХСКИЙ</div>
<div class="t" id="st4" style="left:1323.7px;top:711.86px;font-size:11.50px;color:#f2f2f2;letter-spacing:-0.421px;">110%</div>
<div class="t" id="kk" style="left:1147.8px;top:740.56px;font-size:11.50px;color:#eeeee6;letter-spacing:0.000px;">КК</div>
<div class="t" id="clk1" style="left:1294.0px;top:735.04px;font-size:12.00px;color:#fff;letter-spacing:-0.808px;">23:12</div>
<div class="t" id="clk2" style="left:1280.2px;top:752.34px;font-size:12.00px;color:#fff;letter-spacing:-0.751px;">24.02.2022</div>
<div class="t" id="dt" style="left:649.7px;top:238.16px;font-size:17.60px;color:#000;letter-spacing:0.070px;font-family:'Liberation Serif',serif;">«Атымтай Жомарт» әңгімесі</div>
<div class="t" id="n1" style="left:378.0px;top:259.26px;font-size:17.60px;color:#000;letter-spacing:0.000px;font-family:'Liberation Serif',serif;">1</div>
<div class="t" id="n2" style="left:377.6px;top:447.26px;font-size:17.60px;color:#000;letter-spacing:0.000px;font-family:'Liberation Serif',serif;">2</div>
<div class="t" id="n3" style="left:377.8px;top:623.56px;font-size:17.60px;color:#000;letter-spacing:0.000px;font-family:'Liberation Serif',serif;">3</div>
</body></html>
